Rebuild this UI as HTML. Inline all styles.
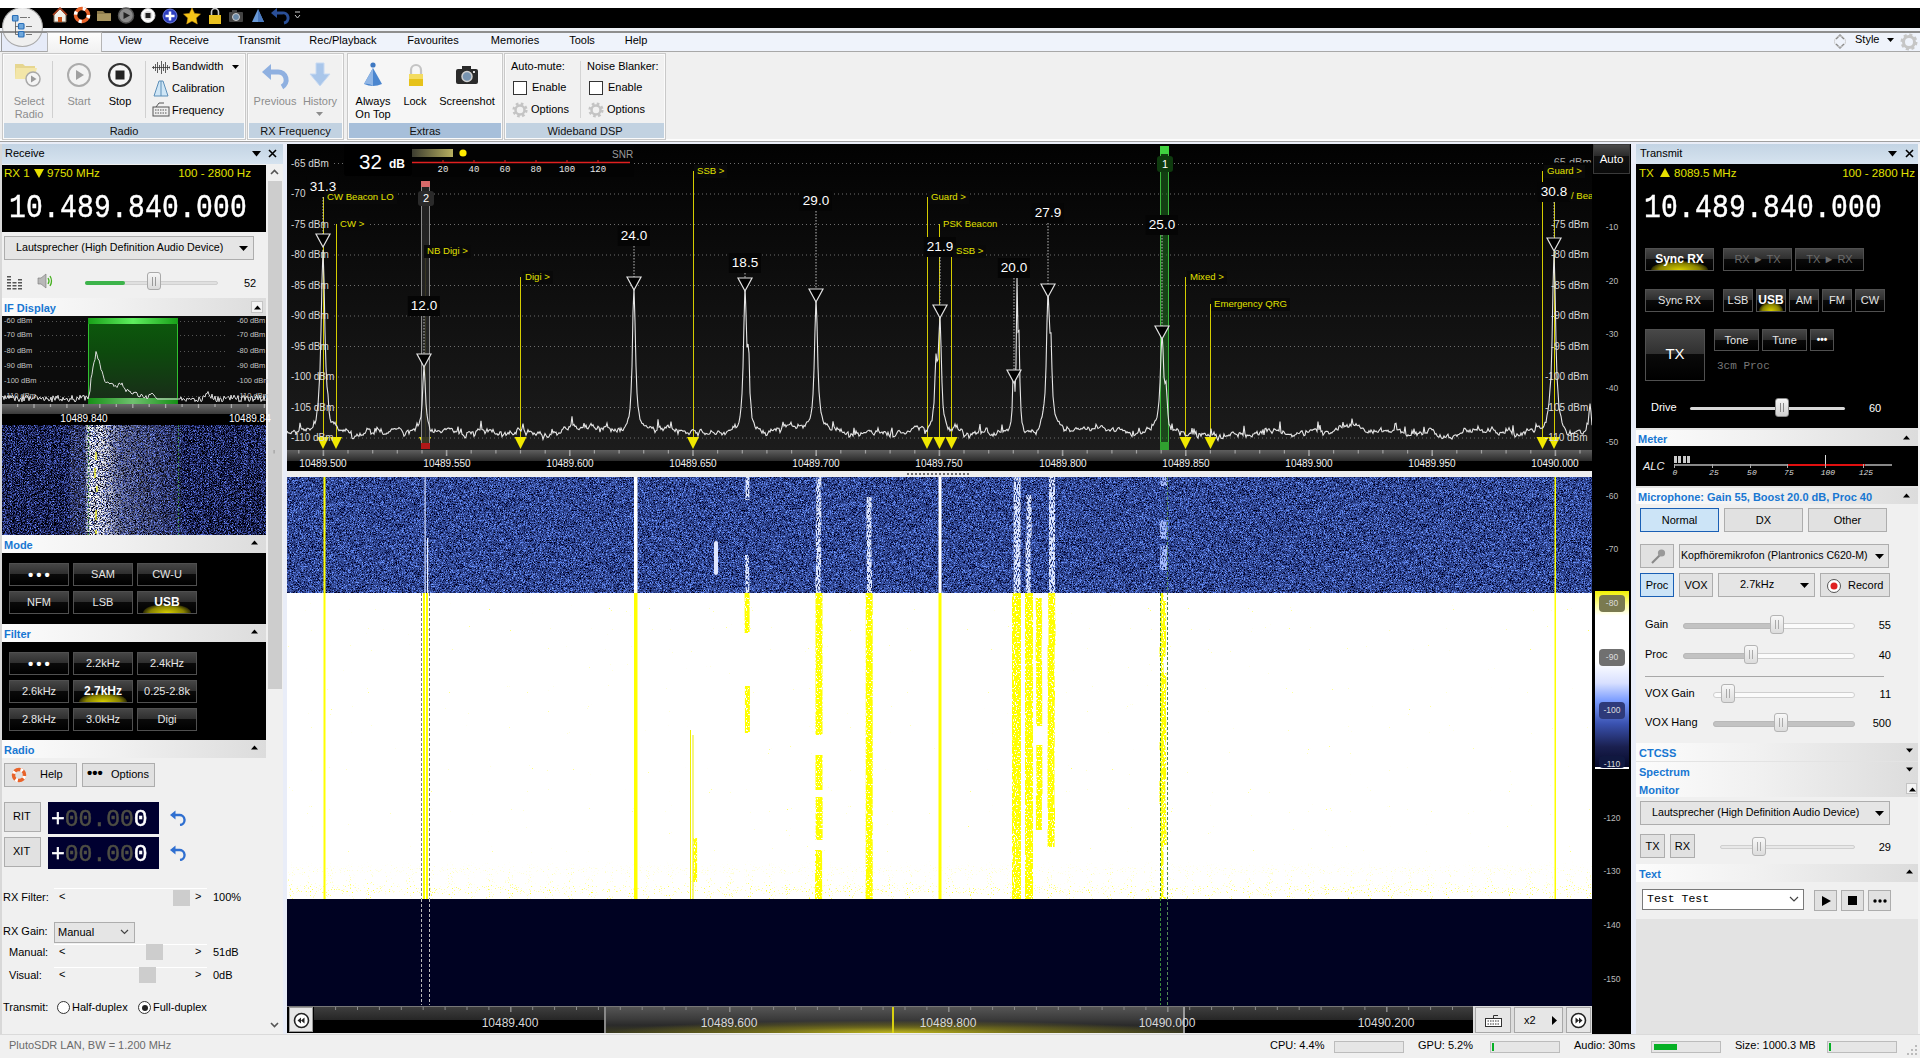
<!DOCTYPE html>
<html><head><meta charset="utf-8"><style>
*{margin:0;padding:0;box-sizing:border-box}
html,body{width:1920px;height:1058px;overflow:hidden;background:#f0f0f0;font-family:"Liberation Sans",sans-serif;font-size:11px;color:#000}
.a{position:absolute}
.t{position:absolute;white-space:nowrap;line-height:1}
.c{transform:translateX(-50%)}
.mono{font-family:"Liberation Mono",monospace}
.bb{position:absolute;background:linear-gradient(#464646 0%,#2e2e2e 48%,#0a0a0a 49%,#000 100%);border:1px solid #505050;color:#e6e6e6;text-align:center;font-size:11px}
.hdr{position:absolute;background:linear-gradient(90deg,#fcfcfc 0%,#f0f0f0 45%,#dcdcdc 100%);color:#1877d2;font-weight:bold;font-size:11px}
.wb{position:absolute;background:#e1e1e1;border:1px solid #adadad;text-align:center;font-size:11px;color:#000}
.grp{position:absolute;border:1px solid #c9c9c9;background:#f1f1f1;box-shadow:inset 0 0 0 1px #fbfbfb}
.glab{position:absolute;left:1px;right:1px;bottom:1px;height:15px;background:#c2d2e1;text-align:center;font-size:11px;line-height:17px;color:#111}
.rt{position:absolute;white-space:nowrap;line-height:1;font-size:11px;transform:translateX(-50%)}
.ph{position:absolute;background:linear-gradient(#c3d4e4,#d6e3ef);font-size:11px}
</style></head><body>
<div class="a" style="left:0px;top:0px;width:1920px;height:8px;background:#fff"></div>
<div class="a" style="left:0px;top:8px;width:1920px;height:20px;background:#000"></div>
<div class="a" style="left:0px;top:28px;width:1920px;height:3px;background:#eef1f6"></div>
<div class="a" style="left:0px;top:31px;width:1920px;height:2px;background:#8e8e8e"></div>
<div class="a" style="left:0px;top:33px;width:1920px;height:18px;background:#eff3fb"></div>
<div class="a" style="left:0px;top:51px;width:1920px;height:1px;background:#a8a8a8"></div>
<div class="a" style="left:1px;top:33px;width:46px;height:18px;background:#e6ebf8;border-left:1px solid #9a9a9a"></div>
<div class="a" style="left:47px;top:32px;width:55px;height:20px;background:linear-gradient(#fdfdfd,#f1f1f1);border:1px solid #b5b5b5;border-bottom:none"></div>
<div class="rt" style="left:74px;top:35px;font-size:11px;">Home</div>
<div class="rt" style="left:130px;top:35px;font-size:11px;">View</div>
<div class="rt" style="left:189px;top:35px;font-size:11px;">Receive</div>
<div class="rt" style="left:259px;top:35px;font-size:11px;">Transmit</div>
<div class="rt" style="left:343px;top:35px;font-size:11px;">Rec/Playback</div>
<div class="rt" style="left:433px;top:35px;font-size:11px;">Favourites</div>
<div class="rt" style="left:515px;top:35px;font-size:11px;">Memories</div>
<div class="rt" style="left:582px;top:35px;font-size:11px;">Tools</div>
<div class="rt" style="left:636px;top:35px;font-size:11px;">Help</div>
<div class="a" style="left:2px;top:7px;width:41px;height:40px;border-radius:50%;background:#efefef;border:1px solid #a9a9a9;clip-path:inset(1px 0 0 0)"></div>
<div class="a" style="left:2px;top:31px;width:41px;height:2px;background:#8e8e8e"></div>
<svg class="a" style="left:10px;top:15px" width="26" height="24" viewBox="0 -1 26 24">
<g stroke="#555" stroke-width="0.8" fill="none"><path d="M5.5 5V18.5H9M5.5 10.5H9M10 1.5H17M18 1.5H20M16 10.5H22M16 18.5H22"/></g>
<g fill="#6fa8dc" stroke="#2a6fb8" stroke-width="1.2">
<rect x="2.5" y="-0.5" width="5.5" height="5.5" rx="1"/><rect x="8.5" y="7.5" width="5.5" height="5.5" rx="1"/><rect x="8.5" y="15.5" width="5.5" height="5.5" rx="1"/></g></svg>
<svg class="a" style="left:50px;top:5px" width="260" height="22" viewBox="0 0 260 22">
<path d="M4 10L10 4L16 10V17H4Z" fill="#f2efe8" stroke="#7a6a5a"/><path d="M3 10L10 3L17 10" fill="none" stroke="#b04020" stroke-width="1.5"/><rect x="8" y="12" width="4" height="5" fill="#c8501a"/>
<circle cx="32" cy="10" r="6.5" fill="none" stroke="#e8632a" stroke-width="3.5"/><circle cx="32" cy="10" r="6.5" fill="none" stroke="#fff" stroke-width="3.5" stroke-dasharray="3 7.2"/>
<path d="M47 6H53L55 8H61V16H47Z" fill="#8c7a4c"/><path d="M47 9H61V16H47Z" fill="#a89560"/>
<circle cx="76" cy="10.5" r="7.5" fill="#8a8a8a" stroke="#555" stroke-width="1.5"/><path d="M73.5 7L80 10.5L73.5 14Z" fill="#222"/>
<circle cx="98" cy="10.5" r="7" fill="#fff" stroke="#ccc" stroke-width="1"/><circle cx="98" cy="10.5" r="4.5" fill="#ddd"/><rect x="95.5" y="8" width="5" height="5" fill="#222"/>
<circle cx="120" cy="11" r="7" fill="#2d3fbf" stroke="#6f7fe0" stroke-width="1"/><path d="M120 6.5V15.5M115.5 11H124.5" stroke="#fff" stroke-width="2.5"/>
<path d="M142 3L144.6 8.4L150.5 9.1L146.2 13.1L147.3 19L142 16.1L136.7 19L137.8 13.1L133.5 9.1L139.4 8.4Z" fill="#f5c518" stroke="#d89a10" stroke-width=".5"/>
<path d="M161.5 10V7A3.5 3.5 0 0 1 168.5 7V10" fill="none" stroke="#c8c8c8" stroke-width="1.6"/><rect x="159" y="10" width="12" height="9" fill="#e8c020"/>
<rect x="179" y="7" width="14" height="10" rx="1" fill="#444"/><circle cx="186" cy="12" r="3.5" fill="#6a8aa8" stroke="#ccc"/><rect x="182" y="5" width="5" height="3" fill="#444"/>
<path d="M208 4L202 17H214Z" fill="#6a9ad8"/><path d="M208 4L208 17H214Z" fill="#4a7ac0"/>
<path d="M225 8H232A5 5 0 0 1 234 18" fill="none" stroke="#2a4f98" stroke-width="3"/><path d="M221 8L227 3V13Z" fill="#2a4f98"/>
<path d="M245 7H250M245 10L247.5 13L250 10" stroke="#ccc" fill="none"/>
</svg>
<svg class="a" style="left:1834px;top:33px" width="12" height="17" viewBox="0 0 12 17"><path d="M2 6L6 2L10 6M2 11L6 15L10 11" fill="none" stroke="#888" stroke-width="1.5"/><circle cx="6" cy="8.5" r="5.5" fill="none" stroke="#ccc"/></svg>
<div class="t" style="left:1855px;top:34px;font-size:11px">Style</div>
<svg class="a" style="left:1887px;top:38px" width="8" height="5"><path d="M0 0H7L3.5 4Z" fill="#000"/></svg>
<svg class="a" style="left:1900px;top:33px" width="18" height="18" viewBox="0 0 18 18"><circle cx="9" cy="9" r="5.5" fill="none" stroke="#c6c6c6" stroke-width="3"/><circle cx="9" cy="9" r="7" fill="none" stroke="#c6c6c6" stroke-width="3" stroke-dasharray="3 2.5"/></svg>
<div class="a" style="left:0px;top:52px;width:1920px;height:87px;background:#f0f0f0"></div>
<div class="a" style="left:0px;top:139px;width:1920px;height:2px;background:#fdfdfd"></div>
<div class="a" style="left:0px;top:141px;width:1920px;height:1px;background:#a0a0a0"></div>
<div class="a" style="left:0px;top:142px;width:1920px;height:2px;background:#e9edf7"></div>
<div class="grp" style="left:2px;top:53px;width:244px;height:87px;"><div class="glab" style="">Radio</div></div>
<div class="grp" style="left:247px;top:53px;width:97px;height:87px;"><div class="glab" style="">RX Frequency</div></div>
<div class="grp" style="left:347px;top:53px;width:156px;height:87px;background:#f6f6f6;"><div class="glab" style="background:#a7bfda;">Extras</div></div>
<div class="grp" style="left:504px;top:53px;width:162px;height:87px;"><div class="glab" style="">Wideband DSP</div></div>
<svg class="a" style="left:13px;top:60px" width="32" height="30" viewBox="0 0 32 30">
<path d="M2 4H10L12 6H22V18H2Z" fill="#e6d690"/><path d="M3 8H24L21 19H2Z" fill="#f3e6a8"/>
<circle cx="20" cy="19" r="7" fill="#f4f4f4" stroke="#a8a8a8" stroke-width="1.5"/><path d="M18 15.5L23.5 19L18 22.5Z" fill="#9a9a9a"/></svg>
<div class="rt" style="left:29px;top:96px;color:#8d8d8d;">Select</div>
<div class="rt" style="left:29px;top:109px;color:#8d8d8d;">Radio</div>
<div class="a" style="left:52px;top:61px;width:1px;height:57px;background:#d0d0d0"></div>
<svg class="a" style="left:66px;top:62px" width="26" height="26" viewBox="0 0 26 26"><circle cx="13" cy="13" r="11" fill="#f3f3f3" stroke="#acacac" stroke-width="2"/><path d="M10 8L18 13L10 18Z" fill="#a0a0a0"/></svg>
<div class="rt" style="left:79px;top:96px;color:#8d8d8d;">Start</div>
<svg class="a" style="left:107px;top:62px" width="26" height="26" viewBox="0 0 26 26"><circle cx="13" cy="13" r="11" fill="#f6f6f6" stroke="#333" stroke-width="2.2"/><rect x="8.5" y="8.5" width="9" height="9" fill="#222"/></svg>
<div class="rt" style="left:120px;top:96px;">Stop</div>
<div class="a" style="left:145px;top:61px;width:1px;height:57px;background:#d0d0d0"></div>
<svg class="a" style="left:152px;top:60px" width="18" height="60" viewBox="0 0 18 60">
<path d="M1.5 6V9M3.5 4V11M5.5 2V13M7.5 5V10M9.5 1V14M11.5 4V11M13.5 2V13M15.5 5V10M17.5 6.5V8.5M0 7.5H18" stroke="#3a3a3a" stroke-width="0.8"/>
<path d="M7 21L2 36H16L11 21Z" fill="#cfe6f6" stroke="#5d8fb8"/><path d="M9 21V36" stroke="#5d8fb8"/>
<rect x="1" y="47" width="16" height="9" fill="#eee" stroke="#555"/><path d="M3 50H15M3 53H15" stroke="#555" stroke-dasharray="1.5 1"/><path d="M4 47L7 43H12" stroke="#555" fill="none"/></svg>
<div class="t" style="left:172px;top:61px;">Bandwidth</div>
<svg class="a" style="left:232px;top:65px" width="7" height="4"><path d="M0 0H7L3.5 4Z" fill="#000"/></svg>
<div class="t" style="left:172px;top:83px;">Calibration</div>
<div class="t" style="left:172px;top:105px;">Frequency</div>
<svg class="a" style="left:260px;top:61px" width="32" height="30" viewBox="0 0 32 30"><path d="M6 11H18A8 8 0 0 1 22 26" fill="none" stroke="#8fb0e0" stroke-width="5"/><path d="M2 11L11 3V19Z" fill="#8fb0e0"/></svg>
<div class="rt" style="left:275px;top:96px;color:#8d8d8d;">Previous</div>
<svg class="a" style="left:309px;top:62px" width="22" height="26" viewBox="0 0 22 26"><path d="M7 1H15V12H21L11 24L1 12H7Z" fill="#a9c6ea" stroke="#c8daf2"/></svg>
<div class="rt" style="left:320px;top:96px;color:#8d8d8d;">History</div>
<svg class="a" style="left:316px;top:112px" width="8" height="4"><path d="M0 0H7L3.5 4Z" fill="#8d8d8d"/></svg>
<svg class="a" style="left:361px;top:62px" width="24" height="26" viewBox="0 0 24 26"><circle cx="12" cy="3" r="2.6" fill="#3e78c2"/><path d="M12 6L3 22Q12 26 21 22Z" fill="#4b86cf"/><path d="M12 6L3 22Q8 21 12 24Z" fill="#8fb5e5"/></svg>
<div class="rt" style="left:373px;top:96px;">Always</div>
<div class="rt" style="left:373px;top:109px;">On Top</div>
<svg class="a" style="left:406px;top:63px" width="20" height="24" viewBox="0 0 20 24"><path d="M5 11V7A5 5 0 0 1 15 7V11" fill="none" stroke="#c4c4c4" stroke-width="2.2"/><rect x="3" y="11" width="14" height="12" fill="#e6c21a"/><rect x="3" y="11" width="14" height="5" fill="#f4dc60"/></svg>
<div class="rt" style="left:415px;top:96px;">Lock</div>
<svg class="a" style="left:455px;top:65px" width="24" height="20" viewBox="0 0 24 20"><rect x="1" y="4" width="22" height="15" rx="2" fill="#2b2b2b"/><rect x="7" y="1" width="9" height="4" fill="#2b2b2b"/><circle cx="12" cy="11.5" r="5" fill="#7894b0" stroke="#d0d0d0" stroke-width="1.5"/><rect x="18" y="6" width="2" height="2" fill="#ddd"/></svg>
<div class="rt" style="left:467px;top:96px;">Screenshot</div>
<div class="a" style="left:513px;top:81px;width:14px;height:14px;background:#fff;border:1px solid #333"></div>
<svg class="a" style="left:512px;top:102px" width="16" height="16" viewBox="0 0 16 16"><circle cx="8" cy="8" r="4.5" fill="none" stroke="#c4c4c4" stroke-width="2.5"/><circle cx="8" cy="8" r="6.3" fill="none" stroke="#c4c4c4" stroke-width="2.6" stroke-dasharray="2.6 2.35"/></svg>
<div class="a" style="left:589px;top:81px;width:14px;height:14px;background:#fff;border:1px solid #333"></div>
<svg class="a" style="left:588px;top:102px" width="16" height="16" viewBox="0 0 16 16"><circle cx="8" cy="8" r="4.5" fill="none" stroke="#c4c4c4" stroke-width="2.5"/><circle cx="8" cy="8" r="6.3" fill="none" stroke="#c4c4c4" stroke-width="2.6" stroke-dasharray="2.6 2.35"/></svg>
<div class="t" style="left:511px;top:61px;">Auto-mute:</div>
<div class="t" style="left:532px;top:82px;">Enable</div>
<div class="t" style="left:531px;top:104px;">Options</div>
<div class="a" style="left:580px;top:61px;width:1px;height:57px;background:#d4d4d4"></div>
<div class="t" style="left:587px;top:61px;">Noise Blanker:</div>
<div class="t" style="left:608px;top:82px;">Enable</div>
<div class="t" style="left:607px;top:104px;">Options</div>
<div class="a" style="left:0px;top:144px;width:284px;height:890px;background:#f0f0f0"></div>
<div class="a" style="left:0px;top:144px;width:2px;height:890px;background:#d8d8d8"></div>
<div class="a" style="left:283px;top:144px;width:4px;height:890px;background:#e9edf8"></div>
<div class="ph" style="left:2px;top:144px;width:281px;height:20px;"></div>
<div class="t" style="left:5px;top:148px;font-size:11px">Receive</div>
<svg class="a" style="left:252px;top:151px" width="9" height="6"><path d="M0 0H9L4.5 5.5Z" fill="#000"/></svg>
<svg class="a" style="left:268px;top:149px" width="9" height="9"><path d="M1 1L8 8M8 1L1 8" stroke="#000" stroke-width="1.6"/></svg>
<div class="a" style="left:267px;top:165px;width:16px;height:868px;background:#f0f0f0"></div>
<svg class="a" style="left:270px;top:169px" width="9" height="6"><path d="M1 5L4.5 1.5L8 5" fill="none" stroke="#555" stroke-width="1.6"/></svg>
<div class="a" style="left:268px;top:181px;width:14px;height:508px;background:#cdcdcd"></div>
<svg class="a" style="left:270px;top:1022px" width="9" height="6"><path d="M1 1L4.5 4.5L8 1" fill="none" stroke="#555" stroke-width="1.6"/></svg>
<div class="a" style="left:2px;top:165px;width:264px;height:67px;background:#000"></div>
<div class="t" style="left:4px;top:167px;color:#e0e000;font-size:11.6px">RX 1</div>
<svg class="a" style="left:34px;top:169px" width="10" height="9"><path d="M0 0H10L5 9Z" fill="#e8e000"/></svg>
<div class="t" style="left:47px;top:167px;color:#e0e000;font-size:11.6px">9750 MHz</div>
<div class="t" style="left:251px;top:167px;color:#e0e000;font-size:11.6px;transform:translateX(-100%)">100 - 2800 Hz</div>
<div class="t mono" style="left:9px;top:192px;color:#fff;font-size:28px;letter-spacing:0.2px;transform:scaleY(1.17);transform-origin:0 0;-webkit-text-stroke:0.4px #fff">10.489.840.000</div>
<div class="a" style="left:4px;top:236px;width:250px;height:24px;background:#e5e5e5;border:1px solid #adadad"></div>
<div class="t" style="left:16px;top:242px;font-size:10.7px">Lautsprecher (High Definition Audio Device)</div>
<svg class="a" style="left:239px;top:246px" width="9" height="5"><path d="M0 0H9L4.5 5Z" fill="#000"/></svg>
<svg class="a" style="left:7px;top:275px" width="18" height="15" viewBox="0 0 18 15"><g fill="#555"><rect x="0" y="1" width="4" height="1.5"/><rect x="0" y="4" width="4" height="1.5"/><rect x="0" y="7" width="4" height="1.5"/><rect x="0" y="10" width="4" height="1.5"/><rect x="0" y="13" width="4" height="1.5"/><rect x="5.5" y="7" width="4" height="1.5"/><rect x="5.5" y="10" width="4" height="1.5"/><rect x="5.5" y="13" width="4" height="1.5"/><rect x="11" y="4" width="4" height="1.5"/><rect x="11" y="7" width="4" height="1.5"/><rect x="11" y="10" width="4" height="1.5"/><rect x="11" y="13" width="4" height="1.5"/></g></svg>
<svg class="a" style="left:37px;top:273px" width="18" height="16" viewBox="0 0 18 16"><path d="M1 5H4L9 1V15L4 11H1Z" fill="#b8b8b8" stroke="#777" stroke-width=".6"/><path d="M11 5Q13 8 11 11M13 3Q16 8 13 13" fill="none" stroke="#46b020" stroke-width="1.3"/></svg>
<div class="a" style="left:85px;top:281px;width:133px;height:4px;background:#e0e0e0;border:1px solid #d0d0d0;border-radius:2px"></div>
<div class="a" style="left:85px;top:281px;width:40px;height:4px;background:#3cb34a;border-radius:2px"></div>
<div class="a" style="left:147px;top:272px;width:14px;height:18px;background:linear-gradient(#f6f6f6,#dadada);border:1px solid #a9a9a9;border-radius:3px"><div class="a" style="left:4px;top:4px;width:4px;height:9px;border-left:1px solid #999;border-right:1px solid #999"></div></div>
<div class="t" style="left:244px;top:278px;">52</div>
<div class="hdr" style="left:2px;top:298px;width:264px;height:18px;line-height:20px;padding-left:2px">IF Display</div>
<div class="a" style="left:251px;top:301px;width:12px;height:12px;background:#f4f4f4;border:1px solid #c4c4c4"><svg class="a" style="left:2px;top:3px" width="7" height="5"><path d="M0 4.5H7L3.5 0.5Z" fill="#000"/></svg></div>
<div class="a" style="left:2px;top:316px;width:264px;height:88px;background:#0c0c0c"></div>
<div class="t" style="left:4px;top:317px;font-size:7.5px;color:#c4c4c4">-60 dBm</div>
<div class="t" style="left:237px;top:317px;font-size:7.5px;color:#c4c4c4">-60 dBm</div>
<div class="a" style="left:40px;top:321px;width:185px;height:1px;background:repeating-linear-gradient(90deg,#555 0 1px,transparent 1px 4px)"></div>
<div class="t" style="left:4px;top:331px;font-size:7.5px;color:#c4c4c4">-70 dBm</div>
<div class="t" style="left:237px;top:331px;font-size:7.5px;color:#c4c4c4">-70 dBm</div>
<div class="a" style="left:40px;top:335px;width:185px;height:1px;background:repeating-linear-gradient(90deg,#555 0 1px,transparent 1px 4px)"></div>
<div class="t" style="left:4px;top:347px;font-size:7.5px;color:#c4c4c4">-80 dBm</div>
<div class="t" style="left:237px;top:347px;font-size:7.5px;color:#c4c4c4">-80 dBm</div>
<div class="a" style="left:40px;top:351px;width:185px;height:1px;background:repeating-linear-gradient(90deg,#555 0 1px,transparent 1px 4px)"></div>
<div class="t" style="left:4px;top:362px;font-size:7.5px;color:#c4c4c4">-90 dBm</div>
<div class="t" style="left:237px;top:362px;font-size:7.5px;color:#c4c4c4">-90 dBm</div>
<div class="a" style="left:40px;top:366px;width:185px;height:1px;background:repeating-linear-gradient(90deg,#555 0 1px,transparent 1px 4px)"></div>
<div class="t" style="left:4px;top:377px;font-size:7.5px;color:#c4c4c4">-100 dBm</div>
<div class="t" style="left:237px;top:377px;font-size:7.5px;color:#c4c4c4">-100 dBm</div>
<div class="a" style="left:40px;top:381px;width:185px;height:1px;background:repeating-linear-gradient(90deg,#555 0 1px,transparent 1px 4px)"></div>
<div class="t" style="left:4px;top:392px;font-size:7.5px;color:#c4c4c4">-110 dBm</div>
<div class="t" style="left:237px;top:392px;font-size:7.5px;color:#c4c4c4">-110 dBm</div>
<div class="a" style="left:40px;top:396px;width:185px;height:1px;background:repeating-linear-gradient(90deg,#555 0 1px,transparent 1px 4px)"></div>
<div class="a" style="left:88px;top:318px;width:90px;height:86px;background:linear-gradient(#0c5a0c 0%,#0d4a0d 40%,#1a2a1a 100%);border-left:1px solid #30c030;border-right:1px solid #30c030"></div>
<div class="a" style="left:88px;top:318px;width:90px;height:6px;background:linear-gradient(90deg,#18a018,#5ff05f 50%,#18a018)"></div>
<div class="a" style="left:88px;top:398px;width:90px;height:6px;background:linear-gradient(90deg,#159015,#6fc06f 50%,#159015)"></div>
<svg class="a" style="left:0;top:0" width="284" height="410"><polyline points="2,397.3 3,396.1 4,399.6 5,395.5 6,398.8 7,397.6 8,395.4 9,398.6 10,395.3 11,398.0 12,395.5 13,395.6 14,398.0 15,400.8 16,395.9 17,396.6 18,399.4 19,401.6 20,399.0 21,397.8 22,401.8 23,395.3 24,401.0 25,397.0 26,396.0 27,395.8 28,397.2 29,400.7 30,396.3 31,399.1 32,399.5 33,397.6 34,398.8 35,395.4 36,395.4 37,396.4 38,399.8 39,398.0 40,397.2 41,399.1 42,398.2 43,397.1 44,400.6 45,399.9 46,396.7 47,399.0 48,398.7 49,401.1 50,400.1 51,397.0 52,401.9 53,395.8 54,397.9 55,400.3 56,396.1 57,398.4 58,395.3 59,399.7 60,400.4 61,399.0 62,401.1 63,397.2 64,399.9 65,399.2 66,399.1 67,398.2 68,400.9 69,401.6 70,398.3 71,399.6 72,395.4 73,399.9 74,399.5 75,402.0 76,400.8 77,397.0 78,397.7 79,399.7 80,395.2 81,398.2 82,396.2 83,395.8 84,395.4 85,400.4 86,395.9 87,396.7 88,399.0 89,395.0 90,391.0 91,378.2 92,374.2 93,367.0 94,362.3 95,359.6 96,351.5 97,354.7 98,359.2 99,359.9 100,364.4 101,369.8 102,371.1 103,374.8 104,378.7 105,381.7 106,382.8 107,382.0 108,382.2 109,383.1 110,384.0 111,383.0 112,383.8 113,383.8 114,386.5 115,385.4 116,386.2 117,387.5 118,385.3 119,383.1 120,383.5 121,384.8 122,382.9 123,386.3 124,387.7 125,389.0 126,391.7 127,389.6 128,389.6 129,391.4 130,391.0 131,393.2 132,393.8 133,394.0 134,392.0 135,392.8 136,391.9 137,393.1 138,396.3 139,396.5 140,397.0 141,394.4 142,394.6 143,396.7 144,397.9 145,397.5 146,395.6 147,399.0 148,397.8 149,394.6 150,394.4 151,394.2 152,393.0 153,394.2 154,395.0 155,396.6 156,397.8 157,399.0 158,399.0 159,399.0 160,399.0 161,399.0 162,399.0 163,399.0 164,399.0 165,399.0 166,399.0 167,399.0 168,399.0 169,399.0 170,399.0 171,399.0 172,399.0 173,399.0 174,399.0 175,399.0 176,399.0 177,399.0 178,399.0 179,399.0 180,399.0 181,396.9 182,400.4 183,398.6 184,398.9 185,400.3 186,401.4 187,398.1 188,399.3 189,398.5 190,398.6 191,399.8 192,398.2 193,398.7 194,398.3 195,401.6 196,399.9 197,401.1 198,401.6 199,396.8 200,398.9 201,401.6 202,400.9 203,396.0 204,395.9 205,397.1 206,393.5 207,393.7 208,391.5 209,394.7 210,396.5 211,398.3 212,394.1 213,399.0 214,399.6 215,396.0 216,401.2 217,401.8 218,396.5 219,401.7 220,397.8 221,398.4 222,401.9 223,400.8 224,396.1 225,398.0 226,398.6 227,397.4 228,396.4 229,397.2 230,400.1 231,395.1 232,398.9 233,398.1 234,395.1 235,397.3 236,399.4 237,398.6 238,395.5 239,401.9 240,400.5 241,401.8 242,395.7 243,396.9 244,395.3 245,400.5 246,396.9 247,395.9 248,398.0 249,401.4 250,400.7 251,396.8 252,396.0 253,401.4 254,399.0 255,399.9 256,395.6 257,395.4 258,399.8 259,398.0 260,395.5 261,401.6 262,399.4 263,400.6 264,395.6 265,401.0" fill="none" stroke="#ddd" stroke-width="1"/></svg>
<div class="a" style="left:2px;top:404px;width:264px;height:10px;background:linear-gradient(#6a6a6a,#3a3a3a)"></div>
<div class="a" style="left:2px;top:414px;width:264px;height:11px;background:#000"></div>
<div class="t" style="left:84px;top:414px;color:#fff;font-size:10px;transform:translateX(-50%)">10489.840</div>
<div class="t" style="left:229px;top:414px;color:#fff;font-size:10px">10489.84</div>
<svg class="a" style="left:0;top:404px" width="266" height="8"><line x1="17.6" y1="0" x2="17.6" y2="3" stroke="#aaa" stroke-width="1.3"/><line x1="34.0" y1="0" x2="34.0" y2="4" stroke="#aaa" stroke-width="1.3"/><line x1="50.5" y1="0" x2="50.5" y2="3" stroke="#aaa" stroke-width="1.3"/><line x1="66.9" y1="0" x2="66.9" y2="4" stroke="#aaa" stroke-width="1.3"/><line x1="83.4" y1="0" x2="83.4" y2="3" stroke="#aaa" stroke-width="1.3"/><line x1="99.8" y1="0" x2="99.8" y2="4" stroke="#aaa" stroke-width="1.3"/><line x1="116.3" y1="0" x2="116.3" y2="3" stroke="#aaa" stroke-width="1.3"/><line x1="132.8" y1="0" x2="132.8" y2="4" stroke="#aaa" stroke-width="1.3"/><line x1="149.2" y1="0" x2="149.2" y2="3" stroke="#aaa" stroke-width="1.3"/><line x1="165.6" y1="0" x2="165.6" y2="4" stroke="#aaa" stroke-width="1.3"/><line x1="182.1" y1="0" x2="182.1" y2="3" stroke="#aaa" stroke-width="1.3"/><line x1="198.5" y1="0" x2="198.5" y2="4" stroke="#aaa" stroke-width="1.3"/><line x1="215.0" y1="0" x2="215.0" y2="3" stroke="#aaa" stroke-width="1.3"/><line x1="231.4" y1="0" x2="231.4" y2="4" stroke="#aaa" stroke-width="1.3"/><line x1="247.9" y1="0" x2="247.9" y2="3" stroke="#aaa" stroke-width="1.3"/><line x1="264.4" y1="0" x2="264.4" y2="4" stroke="#aaa" stroke-width="1.3"/></svg>
<svg class="a" style="left:2px;top:425px" width="264" height="110" viewBox="2 425 264 110"><defs>
<filter id="ifn" x="0" y="0" width="100%" height="100%" color-interpolation-filters="sRGB"><feTurbulence type="fractalNoise" baseFrequency="1.3" numOctaves="2" seed="17"/><feColorMatrix values="1.1 0 0 0 -0.44  1.4 0 0 0 -0.56  2.4 0 0 0 -0.86  0 0 0 0 1"/></filter>
<filter id="ifm" x="0" y="0" width="100%" height="100%" color-interpolation-filters="sRGB"><feTurbulence type="fractalNoise" baseFrequency="0.6 1.2" numOctaves="2" seed="4"/><feColorMatrix values="5 0 0 0 -2  5 0 0 0 -2  5 0 0 0 -2  0 0 0 0 1"/></filter>
<linearGradient id="ifg" x1="84" x2="180" gradientUnits="userSpaceOnUse"><stop offset="0" stop-color="#fff" stop-opacity="0.15"/><stop offset=".06" stop-color="#fff" stop-opacity="1"/><stop offset=".22" stop-color="#fff" stop-opacity=".9"/><stop offset=".38" stop-color="#dfe6ff" stop-opacity=".45"/><stop offset="1" stop-color="#c0ccff" stop-opacity=".12"/></linearGradient>
<mask id="ifmask" maskUnits="userSpaceOnUse" x="2" y="425" width="264" height="110"><rect x="2" y="425" width="264" height="110" filter="url(#ifm)"/></mask></defs>
<rect x="2" y="425" width="264" height="110" filter="url(#ifn)"/>
<rect x="70" y="425" width="112" height="110" fill="url(#ifg)" mask="url(#ifmask)"/>
<rect x="86" y="425" width="18" height="110" fill="#fff" opacity=".35" mask="url(#ifmask)"/>
<line x1="88.5" y1="425" x2="88.5" y2="535" stroke="#3a8a3a" stroke-dasharray="2 2"/><line x1="178.5" y1="425" x2="178.5" y2="535" stroke="#3a8a3a" stroke-dasharray="2 2"/>
<path d="M96 452V460M95 468V478M97 486V492M96 530V534M96 510V520" stroke="#ee0" stroke-width="1.2"/></svg>
<div class="hdr" style="left:2px;top:535px;width:264px;height:18px;line-height:20px;padding-left:2px">Mode</div><svg class="a" style="left:251px;top:540px" width="8" height="5"><path d="M0 4.5H7L3.5 0.5Z" fill="#000"/></svg>
<div class="a" style="left:2px;top:553px;width:264px;height:71px;background:#000"></div>
<div class="bb" style="left:9px;top:563px;width:60px;height:23px;line-height:21px;font-size:11px;"><span style="position:relative"><span style="font-size:15px;font-weight:bold;letter-spacing:3px;margin-left:3px;color:#fff">•••</span></span></div>
<div class="bb" style="left:73px;top:563px;width:60px;height:23px;line-height:21px;font-size:11px;"><span style="position:relative">SAM</span></div>
<div class="bb" style="left:137px;top:563px;width:60px;height:23px;line-height:21px;font-size:11px;"><span style="position:relative">CW-U</span></div>
<div class="bb" style="left:9px;top:591px;width:60px;height:23px;line-height:21px;font-size:11px;"><span style="position:relative">NFM</span></div>
<div class="bb" style="left:73px;top:591px;width:60px;height:23px;line-height:21px;font-size:11px;"><span style="position:relative">LSB</span></div>
<div class="bb" style="left:137px;top:591px;width:60px;height:23px;line-height:21px;font-size:12px;font-weight:bold;color:#fff;"><div class="a" style="left:8%;right:8%;bottom:0;height:9px;border-radius:50% 50% 0 0/100% 100% 0 0;background:radial-gradient(ellipse at 50% 100%,#d8d000 0%,#8a8400 50%,rgba(0,0,0,0) 80%)"></div><span style="position:relative">USB</span></div>
<div class="hdr" style="left:2px;top:624px;width:264px;height:18px;line-height:20px;padding-left:2px">Filter</div><svg class="a" style="left:251px;top:629px" width="8" height="5"><path d="M0 4.5H7L3.5 0.5Z" fill="#000"/></svg>
<div class="a" style="left:2px;top:642px;width:264px;height:98px;background:#000"></div>
<div class="bb" style="left:9px;top:652px;width:60px;height:23px;line-height:21px;font-size:11px;"><span style="position:relative"><span style="font-size:15px;font-weight:bold;letter-spacing:3px;margin-left:3px;color:#fff">•••</span></span></div>
<div class="bb" style="left:73px;top:652px;width:60px;height:23px;line-height:21px;font-size:11px;"><span style="position:relative">2.2kHz</span></div>
<div class="bb" style="left:137px;top:652px;width:60px;height:23px;line-height:21px;font-size:11px;"><span style="position:relative">2.4kHz</span></div>
<div class="bb" style="left:9px;top:680px;width:60px;height:23px;line-height:21px;font-size:11px;"><span style="position:relative">2.6kHz</span></div>
<div class="bb" style="left:73px;top:680px;width:60px;height:23px;line-height:21px;font-size:12px;font-weight:bold;color:#fff;"><div class="a" style="left:8%;right:8%;bottom:0;height:9px;border-radius:50% 50% 0 0/100% 100% 0 0;background:radial-gradient(ellipse at 50% 100%,#d8d000 0%,#8a8400 50%,rgba(0,0,0,0) 80%)"></div><span style="position:relative">2.7kHz</span></div>
<div class="bb" style="left:137px;top:680px;width:60px;height:23px;line-height:21px;font-size:11px;"><span style="position:relative">0.25-2.8k</span></div>
<div class="bb" style="left:9px;top:708px;width:60px;height:23px;line-height:21px;font-size:11px;"><span style="position:relative">2.8kHz</span></div>
<div class="bb" style="left:73px;top:708px;width:60px;height:23px;line-height:21px;font-size:11px;"><span style="position:relative">3.0kHz</span></div>
<div class="bb" style="left:137px;top:708px;width:60px;height:23px;line-height:21px;font-size:11px;"><span style="position:relative">Digi</span></div>
<div class="hdr" style="left:2px;top:740px;width:264px;height:18px;line-height:20px;padding-left:2px">Radio</div><svg class="a" style="left:251px;top:745px" width="8" height="5"><path d="M0 4.5H7L3.5 0.5Z" fill="#000"/></svg>
<div class="wb" style="left:4px;top:763px;width:73px;height:24px;"></div>
<svg class="a" style="left:11px;top:767px" width="16" height="16" viewBox="0 0 16 16"><circle cx="8" cy="8" r="5.5" fill="none" stroke="#e8632a" stroke-width="3.5"/><circle cx="8" cy="8" r="5.5" fill="none" stroke="#fff" stroke-width="3.6" stroke-dasharray="2.5 6.1" stroke-dashoffset="-1"/></svg>
<div class="t" style="left:40px;top:769px;">Help</div>
<div class="wb" style="left:82px;top:763px;width:73px;height:24px;"></div>
<div class="t" style="left:87px;top:765px;font-size:15px;font-weight:bold;letter-spacing:0px">•••</div>
<div class="t" style="left:111px;top:769px;">Options</div>
<div class="wb" style="left:4px;top:802px;width:37px;height:30px;"></div>
<div class="t" style="left:13px;top:811px;">RIT</div>
<div class="a" style="left:48px;top:802px;width:111px;height:32px;background:#000030"></div>
<div class="t mono" style="left:51px;top:808px;color:#fff;font-size:23px;-webkit-text-stroke:0.5px currentColor;transform:scaleY(1.05);transform-origin:0 0">+<span style="color:#4e4e44">00.00</span>0</div>
<svg class="a" style="left:169px;top:810px" width="18" height="16" viewBox="0 0 18 16"><path d="M5 5H10A5 5 0 0 1 11 15" fill="none" stroke="#2f6fd0" stroke-width="2.4"/><path d="M1 5L6.5 0.5V9.5Z" fill="#2f6fd0"/></svg>
<div class="wb" style="left:4px;top:837px;width:37px;height:30px;"></div>
<div class="t" style="left:13px;top:846px;">XIT</div>
<div class="a" style="left:48px;top:837px;width:111px;height:32px;background:#000030"></div>
<div class="t mono" style="left:51px;top:843px;color:#fff;font-size:23px;-webkit-text-stroke:0.5px currentColor;transform:scaleY(1.05);transform-origin:0 0">+<span style="color:#4e4e44">00.00</span>0</div>
<svg class="a" style="left:169px;top:845px" width="18" height="16" viewBox="0 0 18 16"><path d="M5 5H10A5 5 0 0 1 11 15" fill="none" stroke="#2f6fd0" stroke-width="2.4"/><path d="M1 5L6.5 0.5V9.5Z" fill="#2f6fd0"/></svg>
<div class="t" style="left:3px;top:892px;">RX Filter:</div>
<div class="a" style="left:54px;top:888px;width:153px;height:1px;background:#fff"></div>
<div class="t" style="left:59px;top:891px;font-size:11px">&lt;</div>
<div class="a" style="left:173px;top:890px;width:17px;height:16px;background:#cdcdcd"></div>
<div class="t" style="left:195px;top:891px;font-size:11px">&gt;</div>
<div class="t" style="left:213px;top:892px;">100%</div>
<div class="t" style="left:3px;top:926px;">RX Gain:</div>
<div class="a" style="left:54px;top:922px;width:81px;height:21px;background:#e5e5e5;border:1px solid #adadad"></div>
<div class="t" style="left:58px;top:927px;">Manual</div>
<svg class="a" style="left:120px;top:929px" width="9" height="6"><path d="M1 1L4.5 4.5L8 1" fill="none" stroke="#444" stroke-width="1.2"/></svg>
<div class="a" style="left:54px;top:944px;width:153px;height:1px;background:#fff"></div>
<div class="t" style="left:9px;top:947px;">Manual:</div>
<div class="t" style="left:59px;top:946px;">&lt;</div>
<div class="a" style="left:146px;top:944px;width:17px;height:16px;background:#cdcdcd"></div>
<div class="t" style="left:195px;top:946px;">&gt;</div>
<div class="t" style="left:213px;top:947px;">51dB</div>
<div class="a" style="left:54px;top:967px;width:153px;height:1px;background:#fff"></div>
<div class="t" style="left:9px;top:970px;">Visual:</div>
<div class="t" style="left:59px;top:969px;">&lt;</div>
<div class="a" style="left:139px;top:967px;width:17px;height:16px;background:#cdcdcd"></div>
<div class="t" style="left:195px;top:969px;">&gt;</div>
<div class="t" style="left:213px;top:970px;">0dB</div>
<div class="t" style="left:3px;top:1002px;">Transmit:</div>
<div class="a" style="left:57px;top:1001px;width:13px;height:13px;background:#fff;border:1px solid #333;border-radius:50%"></div>
<div class="t" style="left:72px;top:1002px;">Half-duplex</div>
<div class="a" style="left:138px;top:1001px;width:13px;height:13px;background:#fff;border:1px solid #333;border-radius:50%"><div class="a" style="left:2.5px;top:2.5px;width:6px;height:6px;border-radius:50%;background:#222"></div></div>
<div class="t" style="left:153px;top:1002px;">Full-duplex</div>
<div class="a" style="left:0;top:0;width:1592px;height:1058px;overflow:hidden"><div class="a" style="left:287px;top:144px;width:1305px;height:306px;background:linear-gradient(#020202,#1c1c1c)"></div>
<svg class="a" style="left:0;top:0" width="1920" height="1058" viewBox="0 0 1920 1058">
<line x1="334" y1="163.5" x2="1546" y2="163.5" stroke="#6e6e6e" stroke-width="1" stroke-dasharray="1 3"/>
<line x1="334" y1="194.0" x2="1546" y2="194.0" stroke="#6e6e6e" stroke-width="1" stroke-dasharray="1 3"/>
<line x1="334" y1="224.5" x2="1546" y2="224.5" stroke="#6e6e6e" stroke-width="1" stroke-dasharray="1 3"/>
<line x1="334" y1="255.0" x2="1546" y2="255.0" stroke="#6e6e6e" stroke-width="1" stroke-dasharray="1 3"/>
<line x1="334" y1="285.5" x2="1546" y2="285.5" stroke="#6e6e6e" stroke-width="1" stroke-dasharray="1 3"/>
<line x1="334" y1="316.0" x2="1546" y2="316.0" stroke="#6e6e6e" stroke-width="1" stroke-dasharray="1 3"/>
<line x1="334" y1="346.5" x2="1546" y2="346.5" stroke="#6e6e6e" stroke-width="1" stroke-dasharray="1 3"/>
<line x1="334" y1="377.0" x2="1546" y2="377.0" stroke="#6e6e6e" stroke-width="1" stroke-dasharray="1 3"/>
<line x1="334" y1="407.5" x2="1546" y2="407.5" stroke="#6e6e6e" stroke-width="1" stroke-dasharray="1 3"/>
<line x1="334" y1="438.0" x2="1546" y2="438.0" stroke="#6e6e6e" stroke-width="1" stroke-dasharray="1 3"/>
<rect x="344" y="144" width="68" height="32" rx="3" fill="#000"/>
<rect x="412" y="144" width="222" height="33" fill="#030303"/>
<defs><linearGradient id="snrg" x1="0" x2="1"><stop offset="0" stop-color="#3c3c30"/><stop offset="1" stop-color="#b8b060"/></linearGradient></defs>
<rect x="412" y="149" width="41" height="8" fill="url(#snrg)"/>
<circle cx="463" cy="153" r="3.6" fill="#ffec00"/>
<line x1="412" y1="162.5" x2="630" y2="162.5" stroke="#e02020" stroke-width="1.4"/>
<line x1="443" y1="160" x2="443" y2="163" stroke="#e02020"/>
<line x1="474" y1="160" x2="474" y2="163" stroke="#e02020"/>
<line x1="505" y1="160" x2="505" y2="163" stroke="#e02020"/>
<line x1="536" y1="160" x2="536" y2="163" stroke="#e02020"/>
<line x1="567" y1="160" x2="567" y2="163" stroke="#e02020"/>
<line x1="598" y1="160" x2="598" y2="163" stroke="#e02020"/>
<line x1="323.5" y1="197" x2="323.5" y2="445" stroke="#d4cc00" stroke-width="1"/>
<path d="M317 437H329L323 449Z" fill="#f0e800"/>
<line x1="336.5" y1="224" x2="336.5" y2="445" stroke="#d4cc00" stroke-width="1"/>
<path d="M330 437H342L336 449Z" fill="#f0e800"/>
<line x1="425.5" y1="251" x2="425.5" y2="445" stroke="#d4cc00" stroke-width="1"/>
<path d="M419 437H431L425 449Z" fill="#f0e800"/>
<line x1="520.5" y1="277" x2="520.5" y2="445" stroke="#d4cc00" stroke-width="1"/>
<path d="M514.5 437H526.5L520.5 449Z" fill="#f0e800"/>
<line x1="693.5" y1="171" x2="693.5" y2="445" stroke="#d4cc00" stroke-width="1"/>
<path d="M687 437H699L693 449Z" fill="#f0e800"/>
<line x1="927.5" y1="197" x2="927.5" y2="445" stroke="#d4cc00" stroke-width="1"/>
<path d="M921 437H933L927 449Z" fill="#f0e800"/>
<line x1="939.5" y1="224" x2="939.5" y2="445" stroke="#d4cc00" stroke-width="1"/>
<path d="M933.5 437H945.5L939.5 449Z" fill="#f0e800"/>
<line x1="951.5" y1="251" x2="951.5" y2="445" stroke="#d4cc00" stroke-width="1"/>
<path d="M945.5 437H957.5L951.5 449Z" fill="#f0e800"/>
<line x1="1185.5" y1="277" x2="1185.5" y2="445" stroke="#d4cc00" stroke-width="1"/>
<path d="M1179.5 437H1191.5L1185.5 449Z" fill="#f0e800"/>
<line x1="1210.5" y1="304" x2="1210.5" y2="445" stroke="#d4cc00" stroke-width="1"/>
<path d="M1204.5 437H1216.5L1210.5 449Z" fill="#f0e800"/>
<line x1="1542.5" y1="171" x2="1542.5" y2="445" stroke="#d4cc00" stroke-width="1"/>
<path d="M1536.5 437H1548.5L1542.5 449Z" fill="#f0e800"/>
<line x1="1554.5" y1="197" x2="1554.5" y2="445" stroke="#d4cc00" stroke-width="1"/>
<path d="M1548 437H1560L1554 449Z" fill="#f0e800"/>
</svg>
<div class="t" style="left:289px;top:157.5px;color:#d8d8d8;font-size:10px;padding:1px 2px">-65 dBm</div>
<div class="t" style="left:289px;top:188.0px;color:#d8d8d8;font-size:10px;padding:1px 2px">-70 dBm</div>
<div class="t" style="left:289px;top:218.5px;color:#d8d8d8;font-size:10px;padding:1px 2px">-75 dBm</div>
<div class="t" style="left:289px;top:249.0px;color:#d8d8d8;font-size:10px;padding:1px 2px">-80 dBm</div>
<div class="t" style="left:289px;top:279.5px;color:#d8d8d8;font-size:10px;padding:1px 2px">-85 dBm</div>
<div class="t" style="left:289px;top:310.0px;color:#d8d8d8;font-size:10px;padding:1px 2px">-90 dBm</div>
<div class="t" style="left:289px;top:340.5px;color:#d8d8d8;font-size:10px;padding:1px 2px">-95 dBm</div>
<div class="t" style="left:289px;top:371.0px;color:#d8d8d8;font-size:10px;padding:1px 2px">-100 dBm</div>
<div class="t" style="left:289px;top:401.5px;color:#d8d8d8;font-size:10px;padding:1px 2px">-105 dBm</div>
<div class="t" style="left:289px;top:432.0px;color:#d8d8d8;font-size:10px;padding:1px 2px">-110 dBm</div>
<div class="t" style="left:1549px;top:218.5px;color:#d8d8d8;font-size:10px;padding:1px 2px">-75 dBm</div>
<div class="t" style="left:1549px;top:249.0px;color:#d8d8d8;font-size:10px;padding:1px 2px">-80 dBm</div>
<div class="t" style="left:1549px;top:279.5px;color:#d8d8d8;font-size:10px;padding:1px 2px">-85 dBm</div>
<div class="t" style="left:1549px;top:310.0px;color:#d8d8d8;font-size:10px;padding:1px 2px">-90 dBm</div>
<div class="t" style="left:1549px;top:340.5px;color:#d8d8d8;font-size:10px;padding:1px 2px">-95 dBm</div>
<div class="t" style="left:1543px;top:371.0px;color:#d8d8d8;font-size:10px;padding:1px 2px">-100 dBm</div>
<div class="t" style="left:1543px;top:401.5px;color:#d8d8d8;font-size:10px;padding:1px 2px">-105 dBm</div>
<div class="t" style="left:1543px;top:432.0px;color:#d8d8d8;font-size:10px;padding:1px 2px">-110 dBm</div>
<div class="t" style="left:1550px;top:157px;color:#aaa;font-size:11px;clip-path:inset(0 0 50% 0)">-65 dBm</div>
<div class="t" style="left:359px;top:152px;color:#fff;font-size:20.5px">32</div>
<div class="t" style="left:389px;top:158px;color:#fff;font-size:12px;font-weight:bold">dB</div>
<div class="t" style="left:612px;top:150px;color:#9a9a9a;font-size:10px">SNR</div>
<div class="t mono" style="left:443px;top:166px;color:#e8e8e8;font-size:9px;transform:translateX(-50%)">20</div>
<div class="t mono" style="left:474px;top:166px;color:#e8e8e8;font-size:9px;transform:translateX(-50%)">40</div>
<div class="t mono" style="left:505px;top:166px;color:#e8e8e8;font-size:9px;transform:translateX(-50%)">60</div>
<div class="t mono" style="left:536px;top:166px;color:#e8e8e8;font-size:9px;transform:translateX(-50%)">80</div>
<div class="t mono" style="left:567px;top:166px;color:#e8e8e8;font-size:9px;transform:translateX(-50%)">100</div>
<div class="t mono" style="left:598px;top:166px;color:#e8e8e8;font-size:9px;transform:translateX(-50%)">120</div>
<div class="a" style="left:421px;top:181px;width:9px;height:268px;background:rgba(38,38,38,.9);border-left:1px solid #8a8a8a;border-right:1px solid #8a8a8a"></div>
<div class="a" style="left:421px;top:181px;width:9px;height:6px;background:#d86a6a"></div>
<div class="a" style="left:421px;top:443px;width:9px;height:6px;background:#b01818"></div>
<div class="a" style="left:418px;top:191px;width:16px;height:15px;background:#2a2a2a;border-radius:3px;color:#fff;font-size:11px;text-align:center;line-height:15px">2</div>
<div class="a" style="left:1160px;top:146px;width:9px;height:304px;background:rgba(30,110,30,.55);border-left:1.5px solid #3cb83c;border-right:1.5px solid #3cb83c"></div>
<div class="a" style="left:1160px;top:146px;width:9px;height:8px;background:#40d040"></div>
<div class="a" style="left:1160px;top:442px;width:9px;height:8px;background:#30a030"></div>
<div class="a" style="left:1157px;top:156px;width:16px;height:16px;background:#0e3a0e;border-radius:3px;color:#fff;font-size:11px;text-align:center;line-height:16px">1</div>
<svg class="a" style="left:0;top:0" width="1920" height="1058" viewBox="0 0 1920 1058">
<polyline points="287,430.9 288,432.8 289,432.7 290,433.4 291,433.6 292,431.7 293,431.6 294,430.3 295,431.4 296,433.9 297,431.9 298,431.9 299,430.5 300,422.9 301,427.7 302,429.2 303,428.6 304,430.5 305,429.4 306,430.9 307,428.3 308,428.2 309,428.6 310,430.0 311,428.7 312,428.1 313,427.1 314,421.3 315,423.5 316,420.1 317,411.5 318,405.4 319,388.0 320,369.6 321,331.0 322,280.4 323,249.8 324,279.4 325,331.8 326,367.3 327,386.6 328,394.3 329,410.7 330,418.4 331,422.2 332,421.9 333,421.6 334,423.8 335,422.3 336,425.3 337,426.1 338,429.0 339,430.6 340,429.9 341,430.6 342,429.9 343,431.4 344,429.8 345,431.2 346,428.8 347,430.1 348,430.4 349,432.5 350,433.0 351,431.3 352,438.2 353,438.8 354,438.0 355,436.0 356,436.2 357,434.1 358,435.8 359,436.2 360,433.3 361,435.6 362,434.8 363,435.2 364,433.4 365,433.5 366,431.4 367,428.3 368,429.1 369,428.9 370,429.4 371,434.2 372,433.2 373,432.8 374,434.2 375,428.2 376,431.5 377,427.4 378,428.8 379,429.9 380,431.9 381,429.0 382,432.0 383,434.3 384,434.5 385,433.8 386,434.3 387,433.0 388,433.4 389,431.5 390,431.7 391,429.9 392,428.7 393,429.4 394,428.6 395,428.6 396,429.4 397,428.8 398,428.8 399,427.6 400,428.4 401,429.1 402,430.7 403,432.7 404,436.2 405,435.3 406,432.6 407,430.8 408,430.2 409,433.9 410,430.8 411,430.4 412,430.4 413,429.5 414,428.8 415,430.8 416,427.1 417,423.1 418,425.9 419,424.0 420,419.8 421,416.8 422,405.0 423,382.8 424,365.0 425,381.5 426,403.6 427,414.7 428,421.1 429,424.3 430,429.8 431,431.4 432,429.4 433,432.2 434,432.6 435,429.4 436,431.2 437,431.5 438,430.5 439,430.8 440,431.5 441,432.7 442,432.0 443,430.4 444,429.5 445,428.5 446,429.7 447,428.7 448,428.0 449,428.1 450,429.0 451,428.3 452,428.5 453,430.7 454,432.6 455,431.3 456,432.1 457,431.2 458,426.5 459,433.7 460,432.2 461,428.7 462,434.2 463,435.0 464,436.1 465,438.1 466,436.9 467,432.4 468,432.2 469,431.6 470,432.0 471,433.8 472,431.8 473,431.8 474,436.4 475,434.9 476,431.2 477,430.5 478,428.9 479,429.8 480,429.9 481,420.8 482,429.5 483,429.7 484,430.5 485,433.5 486,431.5 487,428.9 488,431.7 489,430.2 490,429.7 491,430.0 492,431.9 493,429.5 494,432.0 495,433.7 496,434.1 497,433.7 498,435.1 499,434.3 500,431.7 501,431.7 502,436.6 503,435.3 504,434.0 505,432.4 506,435.4 507,434.2 508,432.6 509,434.0 510,431.0 511,432.5 512,433.5 513,434.8 514,434.3 515,432.5 516,433.9 517,429.5 518,427.8 519,428.9 520,430.1 521,431.0 522,428.4 523,423.5 524,429.6 525,432.2 526,435.2 527,432.7 528,429.8 529,431.9 530,431.1 531,431.5 532,432.3 533,434.6 534,432.9 535,434.1 536,435.3 537,433.6 538,432.0 539,433.4 540,431.7 541,433.9 542,435.2 543,439.3 544,436.5 545,433.5 546,435.3 547,436.8 548,437.5 549,436.7 550,434.3 551,434.8 552,429.0 553,432.9 554,431.5 555,432.6 556,432.0 557,435.1 558,434.0 559,432.7 560,433.4 561,432.7 562,429.7 563,428.9 564,426.9 565,427.1 566,428.7 567,429.3 568,429.9 569,426.6 570,426.9 571,424.5 572,416.3 573,425.2 574,424.4 575,426.5 576,426.1 577,428.7 578,428.9 579,429.8 580,428.4 581,427.2 582,427.9 583,427.3 584,423.1 585,427.2 586,425.2 587,428.5 588,428.9 589,427.1 590,425.2 591,423.5 592,425.8 593,424.8 594,427.2 595,428.1 596,429.5 597,428.8 598,426.2 599,427.3 600,432.1 601,428.2 602,428.0 603,429.7 604,426.9 605,426.6 606,426.5 607,423.1 608,427.5 609,427.7 610,428.6 611,431.5 612,428.8 613,430.0 614,431.0 615,429.1 616,430.7 617,432.1 618,428.8 619,428.2 620,431.3 621,428.0 622,430.2 623,430.6 624,428.2 625,426.8 626,424.8 627,423.3 628,419.0 629,416.5 630,408.9 631,392.5 632,366.6 633,312.0 634,287.4 635,321.8 636,366.0 637,393.0 638,406.3 639,412.4 640,419.3 641,421.2 642,423.4 643,423.6 644,425.6 645,426.0 646,425.5 647,426.8 648,428.0 649,427.8 650,426.4 651,427.0 652,428.4 653,427.0 654,429.3 655,432.5 656,430.6 657,430.2 658,419.3 659,427.2 660,426.3 661,429.4 662,428.2 663,430.6 664,428.9 665,427.1 666,428.1 667,425.9 668,425.2 669,427.5 670,427.6 671,421.7 672,428.0 673,429.5 674,430.0 675,431.6 676,429.0 677,430.1 678,434.0 679,430.2 680,430.8 681,430.2 682,430.4 683,431.4 684,430.8 685,431.2 686,433.5 687,432.9 688,433.0 689,434.6 690,433.2 691,431.1 692,429.9 693,429.6 694,430.2 695,430.4 696,433.2 697,432.6 698,435.8 699,432.6 700,429.9 701,429.2 702,431.1 703,432.8 704,433.0 705,434.6 706,433.4 707,433.7 708,434.3 709,434.3 710,433.4 711,430.5 712,431.6 713,432.3 714,432.9 715,434.3 716,434.4 717,432.7 718,431.0 719,431.3 720,432.7 721,432.8 722,434.9 723,433.7 724,432.4 725,434.6 726,433.2 727,431.5 728,430.9 729,430.1 730,430.4 731,429.8 732,429.6 733,426.3 734,427.5 735,424.4 736,427.7 737,426.9 738,425.0 739,422.2 740,416.7 741,407.5 742,393.7 743,367.2 744,322.2 745,285.3 746,313.4 747,347.4 748,344.0 749,353.1 750,393.0 751,404.7 752,417.9 753,420.6 754,422.8 755,426.7 756,428.8 757,427.0 758,428.2 759,428.9 760,428.7 761,431.1 762,433.1 763,430.6 764,433.3 765,432.4 766,435.5 767,435.3 768,433.1 769,431.0 770,432.0 771,429.2 772,430.5 773,430.6 774,429.3 775,428.7 776,430.6 777,428.0 778,428.2 779,428.3 780,432.6 781,430.3 782,427.0 783,421.8 784,426.0 785,424.6 786,426.9 787,425.2 788,425.0 789,424.8 790,424.3 791,422.2 792,425.6 793,426.5 794,426.2 795,426.6 796,428.5 797,427.9 798,424.4 799,425.9 800,425.7 801,425.3 802,425.3 803,427.9 804,425.5 805,426.4 806,423.6 807,421.8 808,421.7 809,420.2 810,418.5 811,413.9 812,407.6 813,394.5 814,369.4 815,329.9 816,298.0 817,323.0 818,366.9 819,391.3 820,402.9 821,412.5 822,415.8 823,420.6 824,423.8 825,422.9 826,424.6 827,423.9 828,425.6 829,427.0 830,429.5 831,430.2 832,429.8 833,421.4 834,426.4 835,428.5 836,430.3 837,427.5 838,429.4 839,429.2 840,431.3 841,429.0 842,432.0 843,432.7 844,432.1 845,433.9 846,434.5 847,432.8 848,431.9 849,437.1 850,436.6 851,433.8 852,434.2 853,435.8 854,427.8 855,434.8 856,431.0 857,433.3 858,432.9 859,436.1 860,435.5 861,432.7 862,433.7 863,433.2 864,432.5 865,432.6 866,432.7 867,431.3 868,430.6 869,430.1 870,431.2 871,430.6 872,432.5 873,434.0 874,435.1 875,433.0 876,430.9 877,431.6 878,428.0 879,431.6 880,433.1 881,432.5 882,432.0 883,433.8 884,431.6 885,431.6 886,432.7 887,435.4 888,432.3 889,435.2 890,436.9 891,431.6 892,427.7 893,437.0 894,436.5 895,436.3 896,434.8 897,432.8 898,430.9 899,430.4 900,431.4 901,432.9 902,433.0 903,432.6 904,432.9 905,434.1 906,433.6 907,431.9 908,430.9 909,431.6 910,431.9 911,430.3 912,428.5 913,428.2 914,427.1 915,426.0 916,426.7 917,425.8 918,427.3 919,429.9 920,427.5 921,427.2 922,426.5 923,427.2 924,428.2 925,433.8 926,430.4 927,431.4 928,427.8 929,425.9 930,424.7 931,421.3 932,420.8 933,411.0 934,403.0 935,376.9 936,353.5 937,361.3 938,359.6 939,335.1 940,314.7 941,345.6 942,382.2 943,404.8 944,414.5 945,417.6 946,422.0 947,425.7 948,429.3 949,427.5 950,431.0 951,429.5 952,430.6 953,428.0 954,426.9 955,424.0 956,427.4 957,425.0 958,429.1 959,430.2 960,430.5 961,428.9 962,429.3 963,432.4 964,437.0 965,435.6 966,435.0 967,433.1 968,433.9 969,438.2 970,436.3 971,433.8 972,434.8 973,432.6 974,433.1 975,431.5 976,434.1 977,432.8 978,433.0 979,430.4 980,424.1 981,433.5 982,431.8 983,432.3 984,432.3 985,431.1 986,428.0 987,428.0 988,432.4 989,433.5 990,435.0 991,435.3 992,434.2 993,436.1 994,433.0 995,435.1 996,434.9 997,433.0 998,430.3 999,431.1 1000,432.2 1001,432.2 1002,424.6 1003,431.9 1004,430.4 1005,431.0 1006,430.2 1007,429.4 1008,430.7 1009,428.8 1010,425.7 1011,421.4 1012,410.1 1013,376.0 1014,370.3 1015,391.8 1016,364.5 1017,277.9 1018,331.9 1019,330.7 1020,382.5 1021,410.2 1022,422.3 1023,425.6 1024,431.1 1025,432.6 1026,431.6 1027,431.0 1028,430.4 1029,431.7 1030,430.8 1031,432.2 1032,429.8 1033,430.9 1034,432.2 1035,432.5 1036,434.4 1037,430.3 1038,429.8 1039,428.0 1040,424.6 1041,419.4 1042,417.0 1043,411.2 1044,403.9 1045,393.0 1046,367.6 1047,322.2 1048,288.9 1049,312.2 1050,333.0 1051,332.8 1052,370.4 1053,396.2 1054,405.7 1055,414.2 1056,416.8 1057,419.3 1058,421.5 1059,421.4 1060,424.4 1061,425.0 1062,425.1 1063,426.8 1064,431.0 1065,429.8 1066,430.6 1067,426.8 1068,428.1 1069,429.1 1070,431.6 1071,430.9 1072,431.0 1073,431.2 1074,430.2 1075,428.6 1076,427.6 1077,429.0 1078,428.2 1079,429.5 1080,429.7 1081,428.5 1082,429.1 1083,428.0 1084,427.0 1085,428.6 1086,429.5 1087,429.2 1088,427.1 1089,428.0 1090,430.7 1091,430.7 1092,428.7 1093,428.9 1094,428.5 1095,428.8 1096,424.4 1097,426.3 1098,428.4 1099,427.9 1100,427.2 1101,425.8 1102,425.6 1103,427.2 1104,427.6 1105,428.5 1106,430.8 1107,430.6 1108,429.7 1109,429.8 1110,431.1 1111,429.8 1112,428.6 1113,427.7 1114,430.8 1115,431.6 1116,431.1 1117,429.2 1118,427.9 1119,427.4 1120,429.2 1121,429.6 1122,429.1 1123,430.7 1124,430.3 1125,430.7 1126,432.9 1127,431.7 1128,432.8 1129,432.4 1130,432.8 1131,435.0 1132,436.6 1133,430.9 1134,435.7 1135,435.1 1136,433.7 1137,433.5 1138,432.5 1139,427.8 1140,431.8 1141,433.8 1142,433.6 1143,431.9 1144,432.6 1145,432.1 1146,429.5 1147,427.3 1148,428.5 1149,428.1 1150,429.5 1151,429.9 1152,424.4 1153,425.4 1154,423.4 1155,420.9 1156,419.9 1157,417.4 1158,410.3 1159,401.0 1160,382.9 1161,354.8 1162,332.2 1163,349.2 1164,377.1 1165,383.2 1166,381.2 1167,397.3 1168,414.0 1169,424.2 1170,425.7 1171,429.8 1172,423.6 1173,430.4 1174,429.7 1175,429.9 1176,430.5 1177,428.7 1178,429.7 1179,431.7 1180,435.6 1181,431.4 1182,431.7 1183,431.7 1184,432.0 1185,435.2 1186,435.3 1187,436.0 1188,435.6 1189,434.2 1190,433.1 1191,433.5 1192,428.2 1193,434.3 1194,428.6 1195,433.8 1196,431.6 1197,436.7 1198,438.1 1199,433.6 1200,433.8 1201,436.2 1202,433.4 1203,434.2 1204,433.4 1205,433.3 1206,435.4 1207,435.8 1208,434.4 1209,435.7 1210,436.5 1211,428.5 1212,435.0 1213,434.5 1214,432.1 1215,435.4 1216,434.3 1217,438.2 1218,440.4 1219,436.7 1220,434.7 1221,438.3 1222,438.4 1223,438.6 1224,434.0 1225,436.4 1226,436.2 1227,435.6 1228,435.8 1229,434.8 1230,435.8 1231,433.3 1232,432.3 1233,432.0 1234,433.2 1235,433.9 1236,434.2 1237,434.6 1238,436.8 1239,433.2 1240,432.5 1241,434.1 1242,433.3 1243,435.5 1244,425.8 1245,433.8 1246,437.1 1247,434.8 1248,435.7 1249,435.1 1250,435.4 1251,436.3 1252,436.9 1253,434.0 1254,434.0 1255,432.7 1256,433.3 1257,431.5 1258,434.7 1259,434.9 1260,432.4 1261,431.3 1262,433.6 1263,429.4 1264,434.9 1265,428.7 1266,428.3 1267,431.5 1268,429.3 1269,428.7 1270,430.5 1271,431.6 1272,433.3 1273,431.3 1274,428.8 1275,429.2 1276,430.0 1277,430.6 1278,430.0 1279,431.0 1280,421.6 1281,433.0 1282,433.7 1283,431.0 1284,431.8 1285,433.8 1286,434.5 1287,434.4 1288,434.4 1289,434.4 1290,434.6 1291,434.0 1292,436.9 1293,435.5 1294,436.3 1295,434.8 1296,434.6 1297,432.8 1298,433.3 1299,433.6 1300,432.6 1301,431.3 1302,430.8 1303,433.3 1304,435.7 1305,435.2 1306,430.7 1307,431.8 1308,432.4 1309,431.9 1310,430.2 1311,429.7 1312,430.6 1313,429.6 1314,429.4 1315,428.7 1316,429.2 1317,431.4 1318,421.5 1319,429.9 1320,425.0 1321,431.7 1322,430.9 1323,435.1 1324,433.7 1325,431.9 1326,431.4 1327,431.3 1328,431.7 1329,433.9 1330,433.7 1331,432.6 1332,432.9 1333,431.5 1334,431.1 1335,429.6 1336,428.3 1337,429.8 1338,430.0 1339,426.0 1340,425.4 1341,426.8 1342,427.7 1343,422.0 1344,426.9 1345,425.7 1346,426.5 1347,424.6 1348,427.4 1349,427.0 1350,424.3 1351,425.9 1352,418.5 1353,424.0 1354,425.2 1355,425.6 1356,423.7 1357,425.6 1358,425.7 1359,425.1 1360,427.3 1361,428.5 1362,428.1 1363,428.0 1364,429.3 1365,431.3 1366,432.3 1367,432.3 1368,433.0 1369,430.7 1370,432.3 1371,430.0 1372,431.6 1373,433.3 1374,430.0 1375,431.7 1376,431.0 1377,432.1 1378,432.3 1379,430.5 1380,429.5 1381,427.8 1382,431.8 1383,431.8 1384,430.5 1385,430.9 1386,430.3 1387,431.2 1388,430.2 1389,432.1 1390,431.7 1391,432.6 1392,431.5 1393,430.4 1394,430.3 1395,423.7 1396,423.3 1397,429.7 1398,429.9 1399,429.4 1400,429.1 1401,432.8 1402,431.7 1403,432.6 1404,433.2 1405,426.5 1406,434.8 1407,436.3 1408,434.8 1409,435.6 1410,435.5 1411,435.5 1412,430.8 1413,433.9 1414,428.7 1415,433.8 1416,432.1 1417,435.5 1418,433.3 1419,433.4 1420,431.8 1421,432.6 1422,434.8 1423,433.9 1424,426.8 1425,433.2 1426,432.8 1427,433.3 1428,430.7 1429,428.6 1430,428.1 1431,428.4 1432,429.8 1433,429.4 1434,430.9 1435,434.1 1436,433.5 1437,435.6 1438,436.7 1439,437.2 1440,434.8 1441,437.3 1442,438.6 1443,438.2 1444,436.0 1445,437.6 1446,437.0 1447,435.4 1448,434.2 1449,437.8 1450,437.4 1451,438.2 1452,439.0 1453,436.6 1454,435.4 1455,435.0 1456,434.9 1457,436.5 1458,434.6 1459,434.5 1460,433.4 1461,433.1 1462,433.1 1463,431.9 1464,428.4 1465,428.4 1466,429.6 1467,431.8 1468,430.5 1469,432.0 1470,429.8 1471,432.3 1472,432.3 1473,429.0 1474,429.2 1475,430.0 1476,429.4 1477,430.2 1478,426.2 1479,428.9 1480,430.4 1481,430.2 1482,429.5 1483,432.5 1484,431.8 1485,432.4 1486,432.5 1487,431.3 1488,428.5 1489,430.8 1490,431.6 1491,429.0 1492,427.0 1493,428.7 1494,430.3 1495,430.3 1496,432.9 1497,432.9 1498,434.4 1499,435.2 1500,432.5 1501,432.3 1502,432.8 1503,431.8 1504,433.2 1505,433.2 1506,428.5 1507,430.9 1508,429.9 1509,427.7 1510,430.3 1511,431.4 1512,433.8 1513,425.4 1514,434.0 1515,437.0 1516,436.2 1517,433.8 1518,435.0 1519,435.9 1520,435.7 1521,432.9 1522,435.2 1523,432.6 1524,431.7 1525,434.2 1526,431.3 1527,428.9 1528,430.2 1529,430.5 1530,429.8 1531,428.9 1532,429.1 1533,430.9 1534,432.2 1535,430.5 1536,424.1 1537,426.8 1538,426.3 1539,426.0 1540,427.9 1541,428.5 1542,427.9 1543,427.7 1544,425.7 1545,422.4 1546,422.5 1547,415.4 1548,410.4 1549,402.8 1550,389.1 1551,376.6 1552,342.0 1553,287.9 1554,251.7 1555,284.8 1556,342.0 1557,376.9 1558,391.9 1559,407.4 1560,412.6 1561,416.0 1562,422.4 1563,425.5 1564,426.8 1565,428.5 1566,430.8 1567,434.1 1568,435.2 1569,433.7 1570,430.8 1571,434.6 1572,433.4 1573,433.4 1574,433.3 1575,431.9 1576,431.7 1577,430.9 1578,430.4 1579,430.0 1580,430.3 1581,433.4 1582,433.9 1583,434.2 1584,431.6 1585,431.3 1586,430.0 1587,423.2 1588,424.0 1589,413.1 1590,403.5 1591,412.4 1592,425.3" fill="none" stroke="#e6e6e6" stroke-width="1.1"/>
<line x1="323" y1="197" x2="323" y2="234" stroke="#bbb" stroke-width="1" stroke-dasharray="1.5 1.5"/>
<path d="M316 234H330L323 247Z" fill="#000" stroke="#e0e0e0" stroke-width="1.2"/>
<line x1="424" y1="316" x2="424" y2="354" stroke="#bbb" stroke-width="1" stroke-dasharray="1.5 1.5"/>
<path d="M417 354H431L424 367Z" fill="#000" stroke="#e0e0e0" stroke-width="1.2"/>
<line x1="634" y1="246" x2="634" y2="277" stroke="#bbb" stroke-width="1" stroke-dasharray="1.5 1.5"/>
<path d="M627 277H641L634 290Z" fill="#000" stroke="#e0e0e0" stroke-width="1.2"/>
<line x1="745" y1="273" x2="745" y2="278" stroke="#bbb" stroke-width="1" stroke-dasharray="1.5 1.5"/>
<path d="M738 278H752L745 291Z" fill="#000" stroke="#e0e0e0" stroke-width="1.2"/>
<line x1="816" y1="211" x2="816" y2="289" stroke="#bbb" stroke-width="1" stroke-dasharray="1.5 1.5"/>
<path d="M809 289H823L816 302Z" fill="#000" stroke="#e0e0e0" stroke-width="1.2"/>
<line x1="940" y1="257" x2="940" y2="305" stroke="#bbb" stroke-width="1" stroke-dasharray="1.5 1.5"/>
<path d="M933 305H947L940 318Z" fill="#000" stroke="#e0e0e0" stroke-width="1.2"/>
<line x1="1014" y1="278" x2="1014" y2="370" stroke="#bbb" stroke-width="1" stroke-dasharray="1.5 1.5"/>
<path d="M1007 370H1021L1014 383Z" fill="#000" stroke="#e0e0e0" stroke-width="1.2"/>
<line x1="1048" y1="223" x2="1048" y2="284" stroke="#bbb" stroke-width="1" stroke-dasharray="1.5 1.5"/>
<path d="M1041 284H1055L1048 297Z" fill="#000" stroke="#e0e0e0" stroke-width="1.2"/>
<line x1="1162" y1="235" x2="1162" y2="326" stroke="#bbb" stroke-width="1" stroke-dasharray="1.5 1.5"/>
<path d="M1155 326H1169L1162 339Z" fill="#000" stroke="#e0e0e0" stroke-width="1.2"/>
<line x1="1554" y1="202" x2="1554" y2="238" stroke="#bbb" stroke-width="1" stroke-dasharray="1.5 1.5"/>
<path d="M1547 238H1561L1554 251Z" fill="#000" stroke="#e0e0e0" stroke-width="1.2"/>
</svg>
<div class="t" style="left:323px;top:177px;transform:translateX(-50%);background:#050505;color:#fff;font-size:13.5px;padding:3px 3px 3px">31.3</div>
<div class="t" style="left:424px;top:296px;transform:translateX(-50%);background:#050505;color:#fff;font-size:13.5px;padding:3px 3px 3px">12.0</div>
<div class="t" style="left:634px;top:226px;transform:translateX(-50%);background:#050505;color:#fff;font-size:13.5px;padding:3px 3px 3px">24.0</div>
<div class="t" style="left:745px;top:253px;transform:translateX(-50%);background:#050505;color:#fff;font-size:13.5px;padding:3px 3px 3px">18.5</div>
<div class="t" style="left:816px;top:191px;transform:translateX(-50%);background:#050505;color:#fff;font-size:13.5px;padding:3px 3px 3px">29.0</div>
<div class="t" style="left:940px;top:237px;transform:translateX(-50%);background:#050505;color:#fff;font-size:13.5px;padding:3px 3px 3px">21.9</div>
<div class="t" style="left:1014px;top:258px;transform:translateX(-50%);background:#050505;color:#fff;font-size:13.5px;padding:3px 3px 3px">20.0</div>
<div class="t" style="left:1048px;top:203px;transform:translateX(-50%);background:#050505;color:#fff;font-size:13.5px;padding:3px 3px 3px">27.9</div>
<div class="t" style="left:1162px;top:215px;transform:translateX(-50%);background:#050505;color:#fff;font-size:13.5px;padding:3px 3px 3px">25.0</div>
<div class="t" style="left:1554px;top:182px;transform:translateX(-50%);background:#050505;color:#fff;font-size:13.5px;padding:3px 3px 3px">30.8</div>
<div class="t" style="left:324px;top:191px;color:#e0e000;font-size:9.6px;background:#090909;padding:1px 3px 2px">CW Beacon LO</div>
<div class="t" style="left:337px;top:218px;color:#e0e000;font-size:9.6px;background:#090909;padding:1px 3px 2px">CW &gt;</div>
<div class="t" style="left:424px;top:245px;color:#e0e000;font-size:9.6px;background:#090909;padding:1px 3px 2px">NB Digi &gt;</div>
<div class="t" style="left:522px;top:271px;color:#e0e000;font-size:9.6px;background:#090909;padding:1px 3px 2px">Digi &gt;</div>
<div class="t" style="left:694px;top:165px;color:#e0e000;font-size:9.6px;background:#090909;padding:1px 3px 2px">SSB &gt;</div>
<div class="t" style="left:928px;top:191px;color:#e0e000;font-size:9.6px;background:#090909;padding:1px 3px 2px">Guard &gt;</div>
<div class="t" style="left:940px;top:218px;color:#e0e000;font-size:9.6px;background:#090909;padding:1px 3px 2px">PSK Beacon</div>
<div class="t" style="left:953px;top:245px;color:#e0e000;font-size:9.6px;background:#090909;padding:1px 3px 2px">SSB &gt;</div>
<div class="t" style="left:1187px;top:271px;color:#e0e000;font-size:9.6px;background:#090909;padding:1px 3px 2px">Mixed &gt;</div>
<div class="t" style="left:1211px;top:298px;color:#e0e000;font-size:9.6px;background:#090909;padding:1px 3px 2px">Emergency QRG</div>
<div class="t" style="left:1544px;top:165px;color:#e0e000;font-size:9.6px;background:#090909;padding:1px 3px 2px">Guard &gt;</div>
<div class="t" style="left:1569px;top:191px;color:#e0e000;font-size:9.6px;background:#080808;padding:0 2px">/ Bea</div>
<div class="a" style="left:287px;top:450px;width:1305px;height:11px;background:linear-gradient(#5e5e5e,#2a2a2a)"></div>
<svg class="a" style="left:0;top:0" width="1920" height="460"><line x1="274.1" y1="450" x2="274.1" y2="453.5" stroke="#a0a0a0" stroke-width="1.2"/><line x1="298.8" y1="450" x2="298.8" y2="453.5" stroke="#a0a0a0" stroke-width="1.2"/><line x1="323.4" y1="450" x2="323.4" y2="456" stroke="#a0a0a0" stroke-width="1.6"/><line x1="348.0" y1="450" x2="348.0" y2="453.5" stroke="#a0a0a0" stroke-width="1.2"/><line x1="372.7" y1="450" x2="372.7" y2="453.5" stroke="#a0a0a0" stroke-width="1.2"/><line x1="397.3" y1="450" x2="397.3" y2="453.5" stroke="#a0a0a0" stroke-width="1.2"/><line x1="422.0" y1="450" x2="422.0" y2="453.5" stroke="#a0a0a0" stroke-width="1.2"/><line x1="446.6" y1="450" x2="446.6" y2="456" stroke="#a0a0a0" stroke-width="1.6"/><line x1="471.2" y1="450" x2="471.2" y2="453.5" stroke="#a0a0a0" stroke-width="1.2"/><line x1="495.9" y1="450" x2="495.9" y2="453.5" stroke="#a0a0a0" stroke-width="1.2"/><line x1="520.5" y1="450" x2="520.5" y2="453.5" stroke="#a0a0a0" stroke-width="1.2"/><line x1="545.2" y1="450" x2="545.2" y2="453.5" stroke="#a0a0a0" stroke-width="1.2"/><line x1="569.8" y1="450" x2="569.8" y2="456" stroke="#a0a0a0" stroke-width="1.6"/><line x1="594.4" y1="450" x2="594.4" y2="453.5" stroke="#a0a0a0" stroke-width="1.2"/><line x1="619.1" y1="450" x2="619.1" y2="453.5" stroke="#a0a0a0" stroke-width="1.2"/><line x1="643.7" y1="450" x2="643.7" y2="453.5" stroke="#a0a0a0" stroke-width="1.2"/><line x1="668.4" y1="450" x2="668.4" y2="453.5" stroke="#a0a0a0" stroke-width="1.2"/><line x1="693.0" y1="450" x2="693.0" y2="456" stroke="#a0a0a0" stroke-width="1.6"/><line x1="717.6" y1="450" x2="717.6" y2="453.5" stroke="#a0a0a0" stroke-width="1.2"/><line x1="742.3" y1="450" x2="742.3" y2="453.5" stroke="#a0a0a0" stroke-width="1.2"/><line x1="766.9" y1="450" x2="766.9" y2="453.5" stroke="#a0a0a0" stroke-width="1.2"/><line x1="791.6" y1="450" x2="791.6" y2="453.5" stroke="#a0a0a0" stroke-width="1.2"/><line x1="816.2" y1="450" x2="816.2" y2="456" stroke="#a0a0a0" stroke-width="1.6"/><line x1="840.8" y1="450" x2="840.8" y2="453.5" stroke="#a0a0a0" stroke-width="1.2"/><line x1="865.5" y1="450" x2="865.5" y2="453.5" stroke="#a0a0a0" stroke-width="1.2"/><line x1="890.1" y1="450" x2="890.1" y2="453.5" stroke="#a0a0a0" stroke-width="1.2"/><line x1="914.8" y1="450" x2="914.8" y2="453.5" stroke="#a0a0a0" stroke-width="1.2"/><line x1="939.4" y1="450" x2="939.4" y2="456" stroke="#a0a0a0" stroke-width="1.6"/><line x1="964.0" y1="450" x2="964.0" y2="453.5" stroke="#a0a0a0" stroke-width="1.2"/><line x1="988.7" y1="450" x2="988.7" y2="453.5" stroke="#a0a0a0" stroke-width="1.2"/><line x1="1013.3" y1="450" x2="1013.3" y2="453.5" stroke="#a0a0a0" stroke-width="1.2"/><line x1="1038.0" y1="450" x2="1038.0" y2="453.5" stroke="#a0a0a0" stroke-width="1.2"/><line x1="1062.6" y1="450" x2="1062.6" y2="456" stroke="#a0a0a0" stroke-width="1.6"/><line x1="1087.2" y1="450" x2="1087.2" y2="453.5" stroke="#a0a0a0" stroke-width="1.2"/><line x1="1111.9" y1="450" x2="1111.9" y2="453.5" stroke="#a0a0a0" stroke-width="1.2"/><line x1="1136.5" y1="450" x2="1136.5" y2="453.5" stroke="#a0a0a0" stroke-width="1.2"/><line x1="1161.2" y1="450" x2="1161.2" y2="453.5" stroke="#a0a0a0" stroke-width="1.2"/><line x1="1185.8" y1="450" x2="1185.8" y2="456" stroke="#a0a0a0" stroke-width="1.6"/><line x1="1210.4" y1="450" x2="1210.4" y2="453.5" stroke="#a0a0a0" stroke-width="1.2"/><line x1="1235.1" y1="450" x2="1235.1" y2="453.5" stroke="#a0a0a0" stroke-width="1.2"/><line x1="1259.7" y1="450" x2="1259.7" y2="453.5" stroke="#a0a0a0" stroke-width="1.2"/><line x1="1284.4" y1="450" x2="1284.4" y2="453.5" stroke="#a0a0a0" stroke-width="1.2"/><line x1="1309.0" y1="450" x2="1309.0" y2="456" stroke="#a0a0a0" stroke-width="1.6"/><line x1="1333.6" y1="450" x2="1333.6" y2="453.5" stroke="#a0a0a0" stroke-width="1.2"/><line x1="1358.3" y1="450" x2="1358.3" y2="453.5" stroke="#a0a0a0" stroke-width="1.2"/><line x1="1382.9" y1="450" x2="1382.9" y2="453.5" stroke="#a0a0a0" stroke-width="1.2"/><line x1="1407.6" y1="450" x2="1407.6" y2="453.5" stroke="#a0a0a0" stroke-width="1.2"/><line x1="1432.2" y1="450" x2="1432.2" y2="456" stroke="#a0a0a0" stroke-width="1.6"/><line x1="1456.8" y1="450" x2="1456.8" y2="453.5" stroke="#a0a0a0" stroke-width="1.2"/><line x1="1481.5" y1="450" x2="1481.5" y2="453.5" stroke="#a0a0a0" stroke-width="1.2"/><line x1="1506.1" y1="450" x2="1506.1" y2="453.5" stroke="#a0a0a0" stroke-width="1.2"/><line x1="1530.8" y1="450" x2="1530.8" y2="453.5" stroke="#a0a0a0" stroke-width="1.2"/><line x1="1555.4" y1="450" x2="1555.4" y2="456" stroke="#a0a0a0" stroke-width="1.6"/><line x1="1580.0" y1="450" x2="1580.0" y2="453.5" stroke="#a0a0a0" stroke-width="1.2"/><line x1="1604.7" y1="450" x2="1604.7" y2="453.5" stroke="#a0a0a0" stroke-width="1.2"/></svg>
<div class="a" style="left:287px;top:461px;width:1305px;height:10px;background:#000"></div>
<div class="t" style="left:323px;top:459px;color:#f0f0f0;font-size:10px;transform:translateX(-50%)">10489.500</div>
<div class="t" style="left:447px;top:459px;color:#f0f0f0;font-size:10px;transform:translateX(-50%)">10489.550</div>
<div class="t" style="left:570px;top:459px;color:#f0f0f0;font-size:10px;transform:translateX(-50%)">10489.600</div>
<div class="t" style="left:693px;top:459px;color:#f0f0f0;font-size:10px;transform:translateX(-50%)">10489.650</div>
<div class="t" style="left:816px;top:459px;color:#f0f0f0;font-size:10px;transform:translateX(-50%)">10489.700</div>
<div class="t" style="left:939px;top:459px;color:#f0f0f0;font-size:10px;transform:translateX(-50%)">10489.750</div>
<div class="t" style="left:1063px;top:459px;color:#f0f0f0;font-size:10px;transform:translateX(-50%)">10489.800</div>
<div class="t" style="left:1186px;top:459px;color:#f0f0f0;font-size:10px;transform:translateX(-50%)">10489.850</div>
<div class="t" style="left:1309px;top:459px;color:#f0f0f0;font-size:10px;transform:translateX(-50%)">10489.900</div>
<div class="t" style="left:1432px;top:459px;color:#f0f0f0;font-size:10px;transform:translateX(-50%)">10489.950</div>
<div class="t" style="left:1555px;top:459px;color:#f0f0f0;font-size:10px;transform:translateX(-50%)">10490.000</div>
<div class="a" style="left:287px;top:471px;width:1305px;height:6px;background:#eeeeee"></div>
<div class="a" style="left:907px;top:473px;width:63px;height:2px;background:repeating-linear-gradient(90deg,#6a6a6a 0 2px,transparent 2px 4px)"></div>
<svg class="a" style="left:287px;top:477px" width="1305" height="529" viewBox="287 477 1305 529">
<defs><filter id="wn" x="0" y="0" width="100%" height="100%" color-interpolation-filters="sRGB"><feTurbulence type="fractalNoise" baseFrequency="1.5" numOctaves="2" seed="5"/><feColorMatrix values="1 0 0 0 -0.31  1.33 0 0 0 -0.39  1.95 0 0 0 -0.405  0 0 0 0 1"/></filter><filter id="yn" x="0" y="0" width="100%" height="100%" color-interpolation-filters="sRGB"><feTurbulence type="fractalNoise" baseFrequency="0.95" numOctaves="1" seed="9"/><feColorMatrix values="0 0 0 0 1  0 0 0 0 1  0 0 0 0 0  9 0 0 0 -6.9"/></filter><filter id="yn2" x="0" y="0" width="100%" height="100%" color-interpolation-filters="sRGB"><feTurbulence type="fractalNoise" baseFrequency="0.95" numOctaves="1" seed="13"/><feColorMatrix values="0 0 0 0 1  0 0 0 0 1  0 0 0 0 0  8 0 0 0 -5.2"/></filter><filter id="hn" x="0" y="0" width="100%" height="100%" color-interpolation-filters="sRGB"><feTurbulence type="fractalNoise" baseFrequency="1.2 0.4" numOctaves="1" seed="21"/><feColorMatrix values="8 0 0 0 -3.1  8 0 0 0 -3.1  8 0 0 0 -3.1  0 0 0 0 1"/></filter><filter id="hn2" x="0" y="0" width="100%" height="100%" color-interpolation-filters="sRGB"><feTurbulence type="fractalNoise" baseFrequency="1.1 0.5" numOctaves="1" seed="23"/><feColorMatrix values="14 0 0 0 -4.9  14 0 0 0 -4.9  14 0 0 0 -4.9  0 0 0 0 1"/></filter><mask id="hm2" maskUnits="userSpaceOnUse" x="287" y="477" width="1305" height="422"><rect x="287" y="477" width="1305" height="422" filter="url(#hn2)"/></mask><linearGradient id="bg2" x1="0" y1="0" x2="0" y2="1"><stop offset="0" stop-color="#fff" stop-opacity="0"/><stop offset="1" stop-color="#fff" stop-opacity="1"/></linearGradient><mask id="bm" maskUnits="userSpaceOnUse" x="287" y="860" width="1305" height="39"><rect x="287" y="860" width="1305" height="39" fill="url(#bg2)"/></mask><mask id="hm" maskUnits="userSpaceOnUse" x="287" y="477" width="1305" height="422"><rect x="287" y="477" width="1305" height="422" filter="url(#hn)"/></mask></defs>
<rect x="287" y="477" width="1305" height="116" filter="url(#wn)"/>
<rect x="287" y="593" width="1305" height="306" fill="#fff"/>
<rect x="287" y="593" width="1305" height="306" filter="url(#yn)"/>
<rect x="287" y="860" width="1305" height="39" filter="url(#yn2)" mask="url(#bm)"/>
<rect x="287" y="899" width="1305" height="107" fill="#000222"/>
<rect x="323.5" y="477" width="2" height="422" fill="#ffff00"/>
<rect x="424.5" y="477" width="1.2" height="116" fill="#d0dcff"/><rect x="427" y="538" width="1.2" height="55" fill="#e8eeff"/>
<rect x="423" y="593" width="2" height="306" fill="#ff0"/><rect x="426" y="593" width="2" height="306" fill="#ff0"/>
<line x1="421.5" y1="593" x2="421.5" y2="899" stroke="#777" stroke-dasharray="3 2"/><line x1="429.5" y1="593" x2="429.5" y2="899" stroke="#777" stroke-dasharray="3 2"/>
<line x1="421.5" y1="899" x2="421.5" y2="1005" stroke="#bbb" stroke-dasharray="3 2"/><line x1="429.5" y1="899" x2="429.5" y2="1005" stroke="#bbb" stroke-dasharray="3 2"/>
<rect x="634" y="477" width="3.5" height="116" fill="#fff"/><rect x="634" y="593" width="3.5" height="306" fill="#ff0"/>
<rect x="938.5" y="477" width="3" height="116" fill="#fff"/><rect x="938.5" y="593" width="3" height="306" fill="#ff0"/>
<rect x="1554.5" y="477" width="1.5" height="422" fill="#ff0"/>
<rect x="714" y="541" width="4" height="34" rx="2" fill="#dfe6ff"/>
<rect x="690" y="730" width="1" height="169" fill="#ee0"/><rect x="692.5" y="735" width="1" height="164" fill="#ee0"/>
<g mask="url(#hm)"><rect x="745.4" y="477" width="4" height="23" fill="#dfe8ff"/><rect x="745.0" y="555" width="4" height="18" fill="#dfe8ff"/><rect x="745.4" y="573" width="4" height="15" fill="#dfe8ff"/><rect x="745.4" y="588" width="4" height="5" fill="#dfe8ff"/><rect x="816.4" y="477" width="5" height="11" fill="#dfe8ff"/><rect x="815.6" y="488" width="5" height="8" fill="#dfe8ff"/><rect x="816.3" y="496" width="5" height="13" fill="#dfe8ff"/><rect x="816.4" y="509" width="5" height="16" fill="#dfe8ff"/><rect x="815.8" y="525" width="5" height="22" fill="#dfe8ff"/><rect x="815.9" y="547" width="5" height="6" fill="#dfe8ff"/><rect x="816.1" y="553" width="5" height="14" fill="#dfe8ff"/><rect x="815.8" y="567" width="5" height="8" fill="#dfe8ff"/><rect x="815.4" y="575" width="5" height="13" fill="#dfe8ff"/><rect x="815.9" y="588" width="5" height="5" fill="#dfe8ff"/><rect x="866.7" y="497" width="5" height="12" fill="#dfe8ff"/><rect x="866.4" y="509" width="5" height="8" fill="#dfe8ff"/><rect x="866.5" y="517" width="5" height="19" fill="#dfe8ff"/><rect x="866.4" y="536" width="5" height="13" fill="#dfe8ff"/><rect x="866.6" y="549" width="5" height="20" fill="#dfe8ff"/><rect x="867.0" y="569" width="5" height="23" fill="#dfe8ff"/><rect x="866.9" y="592" width="5" height="1" fill="#dfe8ff"/><rect x="1013.6" y="477" width="7" height="116" fill="#dfe8ff"/><rect x="1026.5" y="495" width="5" height="28" fill="#dfe8ff"/><rect x="1026.6" y="523" width="5" height="16" fill="#dfe8ff"/><rect x="1025.5" y="539" width="5" height="29" fill="#dfe8ff"/><rect x="1025.7" y="568" width="5" height="14" fill="#dfe8ff"/><rect x="1025.8" y="582" width="5" height="11" fill="#dfe8ff"/><rect x="1049.0" y="477" width="6" height="116" fill="#dfe8ff"/><rect x="1160.5" y="477" width="7" height="9" fill="#aabfff"/><rect x="1159.5" y="520" width="7" height="5" fill="#aabfff"/><rect x="1159.8" y="525" width="7" height="7" fill="#aabfff"/><rect x="1160.1" y="532" width="7" height="7" fill="#aabfff"/><rect x="1160.5" y="545" width="7" height="9" fill="#aabfff"/><rect x="1160.0" y="554" width="7" height="16" fill="#aabfff"/></g><g mask="url(#hm2)"><rect x="744.6" y="593" width="5" height="40" fill="#ffff00"/><rect x="744.9" y="686" width="5" height="47" fill="#ffff00"/><rect x="693.1" y="838" width="4" height="44" fill="#ffff00"/><rect x="815.5" y="593" width="7" height="142" fill="#ffff00"/><rect x="815.5" y="755" width="7" height="35" fill="#ffff00"/><rect x="815.6" y="797" width="7" height="43" fill="#ffff00"/><rect x="815.1" y="850" width="7" height="49" fill="#ffff00"/><rect x="865.7" y="593" width="7" height="306" fill="#ffff00"/><rect x="1012" y="593" width="9" height="306" fill="#ffff00"/><rect x="1025" y="593" width="8" height="306" fill="#ffff00"/><rect x="1035.7" y="598" width="6" height="12" fill="#ffff00"/><rect x="1036.1" y="610" width="6" height="30" fill="#ffff00"/><rect x="1035.6" y="640" width="6" height="21" fill="#ffff00"/><rect x="1036.1" y="661" width="6" height="28" fill="#ffff00"/><rect x="1036.2" y="689" width="6" height="37" fill="#ffff00"/><rect x="1036.3" y="745" width="6" height="36" fill="#ffff00"/><rect x="1036.5" y="781" width="6" height="15" fill="#ffff00"/><rect x="1035.9" y="796" width="6" height="16" fill="#ffff00"/><rect x="1035.9" y="812" width="6" height="18" fill="#ffff00"/><rect x="1048.2" y="593" width="7" height="26" fill="#ffff00"/><rect x="1048.5" y="619" width="7" height="26" fill="#ffff00"/><rect x="1047.6" y="645" width="7" height="41" fill="#ffff00"/><rect x="1048.0" y="686" width="7" height="14" fill="#ffff00"/><rect x="1047.7" y="700" width="7" height="49" fill="#ffff00"/><rect x="1047.5" y="749" width="7" height="23" fill="#ffff00"/><rect x="1047.5" y="772" width="7" height="36" fill="#ffff00"/><rect x="1048.0" y="808" width="7" height="21" fill="#ffff00"/><rect x="1047.6" y="829" width="7" height="18" fill="#ffff00"/><rect x="1160.2" y="601" width="6" height="26" fill="#ffff00"/><rect x="1160.1" y="627" width="6" height="20" fill="#ffff00"/><rect x="1159.5" y="647" width="6" height="10" fill="#ffff00"/><rect x="1160.3" y="673" width="6" height="18" fill="#ffff00"/><rect x="1160.0" y="691" width="6" height="26" fill="#ffff00"/><rect x="1160.3" y="717" width="6" height="25" fill="#ffff00"/><rect x="1159.5" y="742" width="6" height="8" fill="#ffff00"/><rect x="1160.2" y="750" width="6" height="8" fill="#ffff00"/><rect x="1160.2" y="758" width="6" height="23" fill="#ffff00"/><rect x="1159.4" y="781" width="6" height="23" fill="#ffff00"/><rect x="1160.1" y="804" width="6" height="17" fill="#ffff00"/><rect x="1160.5" y="821" width="6" height="24" fill="#ffff00"/><rect x="1159.7" y="897" width="6" height="2" fill="#ffff00"/><rect x="1161" y="593" width="2.5" height="306" fill="#ffff00"/></g>
<line x1="1160.5" y1="593" x2="1160.5" y2="1005" stroke="#3a8a3a" stroke-dasharray="3 2"/><line x1="1167.5" y1="477" x2="1167.5" y2="1005" stroke="#558855" stroke-dasharray="3 2"/>
</svg></div>
<div class="a" style="left:1592px;top:144px;width:39px;height:890px;background:#000"></div>
<div class="a" style="left:1593px;top:144px;width:37px;height:30px;background:linear-gradient(#4a4a4a 0%,#2a2a2a 40%,#111 41%,#0a0a0a 100%);border:1px solid #3a3a3a"><div style="position:absolute;left:0;right:0;top:8px;text-align:center;color:#fff;font-size:11.5px">Auto</div></div>
<div class="a" style="left:1631px;top:144px;width:5px;height:890px;background:#e9edf8"></div>
<div class="a" style="left:1595px;top:591px;width:34px;height:177px;background:linear-gradient(#f0f000 0%,#ffffa0 8%,#fff 14%,#fff 40%,#d8e0ff 52%,#7a9cff 62%,#3a52b0 75%,#1a2050 88%,#050828 100%)"></div>
<div class="a" style="left:1595px;top:767px;width:34px;height:2px;background:#fff"></div>
<div class="t" style="left:1612px;top:223px;color:#bbb;font-size:8.5px;transform:translateX(-50%)">-10</div>
<div class="t" style="left:1612px;top:277px;color:#bbb;font-size:8.5px;transform:translateX(-50%)">-20</div>
<div class="t" style="left:1612px;top:330px;color:#bbb;font-size:8.5px;transform:translateX(-50%)">-30</div>
<div class="t" style="left:1612px;top:384px;color:#bbb;font-size:8.5px;transform:translateX(-50%)">-40</div>
<div class="t" style="left:1612px;top:438px;color:#bbb;font-size:8.5px;transform:translateX(-50%)">-50</div>
<div class="t" style="left:1612px;top:492px;color:#bbb;font-size:8.5px;transform:translateX(-50%)">-60</div>
<div class="t" style="left:1612px;top:545px;color:#bbb;font-size:8.5px;transform:translateX(-50%)">-70</div>
<div class="a" style="left:1599px;top:595px;width:26px;height:17px;background:#7a7a50;border-radius:4px"></div>
<div class="t" style="left:1612px;top:599px;color:#ddd;font-size:8.5px;transform:translateX(-50%)">-80</div>
<div class="a" style="left:1599px;top:649px;width:26px;height:17px;background:#707070;border-radius:4px"></div>
<div class="t" style="left:1612px;top:653px;color:#ddd;font-size:8.5px;transform:translateX(-50%)">-90</div>
<div class="a" style="left:1599px;top:702px;width:26px;height:17px;background:#2e3a7a;border-radius:4px"></div>
<div class="t" style="left:1612px;top:706px;color:#ddd;font-size:8.5px;transform:translateX(-50%)">-100</div>
<div class="a" style="left:1599px;top:756px;width:26px;height:12px;background:#101840;border-radius:4px"></div>
<div class="t" style="left:1612px;top:760px;color:#ddd;font-size:8.5px;transform:translateX(-50%)">-110</div>
<div class="t" style="left:1612px;top:814px;color:#bbb;font-size:8.5px;transform:translateX(-50%)">-120</div>
<div class="t" style="left:1612px;top:867px;color:#bbb;font-size:8.5px;transform:translateX(-50%)">-130</div>
<div class="t" style="left:1612px;top:921px;color:#bbb;font-size:8.5px;transform:translateX(-50%)">-140</div>
<div class="t" style="left:1612px;top:975px;color:#bbb;font-size:8.5px;transform:translateX(-50%)">-150</div>
<div class="a" style="left:287px;top:1006px;width:1305px;height:27px;background:#000"></div>
<div class="a" style="left:287px;top:1006px;width:1305px;height:1px;background:#777"></div>
<div class="a" style="left:289px;top:1007px;width:24px;height:25px;background:#e6e6e6;border:1px solid #9a9a9a"><svg class="a" style="left:3px;top:4px" width="17" height="17" viewBox="0 0 17 17"><circle cx="8.5" cy="8.5" r="7" fill="#fff" stroke="#222" stroke-width="1.6"/><path d="M4.5 8.5L8 5.5V11.5ZM8 8.5L11.5 5.5V11.5Z" fill="#222"/></svg></div>
<div class="a" style="left:314px;top:1007px;width:1159px;height:13px;background:linear-gradient(#3e3e3e,#262626)"></div>
<div class="a" style="left:604px;top:1007px;width:580px;height:26px;background:linear-gradient(#555 0%,#3c3c3c 45%,#2a2a2a 70%,#3a3a20 100%)"></div>
<div class="a" style="left:604px;top:1007px;width:2px;height:26px;background:#888"></div>
<div class="a" style="left:1183px;top:1007px;width:2px;height:26px;background:#999"></div>
<div class="a" style="left:606px;top:1019px;width:577px;height:14px;background:radial-gradient(ellipse 50% 90% at 50% 100%,rgba(215,205,30,.85) 0%,rgba(170,160,20,.5) 45%,rgba(0,0,0,0) 100%)"></div>
<div class="a" style="left:892px;top:1007px;width:2px;height:26px;background:#d8d010"></div>
<svg class="a" style="left:0;top:0" width="1920" height="1058"><line x1="335.6" y1="1007" x2="335.6" y2="1010" stroke="#8a8a8a" stroke-width="1"/><line x1="357.5" y1="1007" x2="357.5" y2="1010" stroke="#8a8a8a" stroke-width="1"/><line x1="379.4" y1="1007" x2="379.4" y2="1010" stroke="#8a8a8a" stroke-width="1"/><line x1="401.3" y1="1007" x2="401.3" y2="1010" stroke="#8a8a8a" stroke-width="1"/><line x1="423.2" y1="1007" x2="423.2" y2="1010" stroke="#8a8a8a" stroke-width="1"/><line x1="445.1" y1="1007" x2="445.1" y2="1010" stroke="#8a8a8a" stroke-width="1"/><line x1="467.0" y1="1007" x2="467.0" y2="1010" stroke="#8a8a8a" stroke-width="1"/><line x1="488.9" y1="1007" x2="488.9" y2="1010" stroke="#8a8a8a" stroke-width="1"/><line x1="510.8" y1="1007" x2="510.8" y2="1012" stroke="#8a8a8a" stroke-width="1.5"/><line x1="532.7" y1="1007" x2="532.7" y2="1010" stroke="#8a8a8a" stroke-width="1"/><line x1="554.6" y1="1007" x2="554.6" y2="1010" stroke="#8a8a8a" stroke-width="1"/><line x1="576.5" y1="1007" x2="576.5" y2="1010" stroke="#8a8a8a" stroke-width="1"/><line x1="598.4" y1="1007" x2="598.4" y2="1010" stroke="#8a8a8a" stroke-width="1"/><line x1="620.3" y1="1007" x2="620.3" y2="1010" stroke="#8a8a8a" stroke-width="1"/><line x1="642.2" y1="1007" x2="642.2" y2="1010" stroke="#8a8a8a" stroke-width="1"/><line x1="664.1" y1="1007" x2="664.1" y2="1010" stroke="#8a8a8a" stroke-width="1"/><line x1="686.0" y1="1007" x2="686.0" y2="1010" stroke="#8a8a8a" stroke-width="1"/><line x1="707.9" y1="1007" x2="707.9" y2="1010" stroke="#8a8a8a" stroke-width="1"/><line x1="729.8" y1="1007" x2="729.8" y2="1012" stroke="#8a8a8a" stroke-width="1.5"/><line x1="751.7" y1="1007" x2="751.7" y2="1010" stroke="#8a8a8a" stroke-width="1"/><line x1="773.6" y1="1007" x2="773.6" y2="1010" stroke="#8a8a8a" stroke-width="1"/><line x1="795.5" y1="1007" x2="795.5" y2="1010" stroke="#8a8a8a" stroke-width="1"/><line x1="817.4" y1="1007" x2="817.4" y2="1010" stroke="#8a8a8a" stroke-width="1"/><line x1="839.3" y1="1007" x2="839.3" y2="1010" stroke="#8a8a8a" stroke-width="1"/><line x1="861.2" y1="1007" x2="861.2" y2="1010" stroke="#8a8a8a" stroke-width="1"/><line x1="883.1" y1="1007" x2="883.1" y2="1010" stroke="#8a8a8a" stroke-width="1"/><line x1="905.0" y1="1007" x2="905.0" y2="1010" stroke="#8a8a8a" stroke-width="1"/><line x1="926.9" y1="1007" x2="926.9" y2="1010" stroke="#8a8a8a" stroke-width="1"/><line x1="948.8" y1="1007" x2="948.8" y2="1012" stroke="#8a8a8a" stroke-width="1.5"/><line x1="970.7" y1="1007" x2="970.7" y2="1010" stroke="#8a8a8a" stroke-width="1"/><line x1="992.6" y1="1007" x2="992.6" y2="1010" stroke="#8a8a8a" stroke-width="1"/><line x1="1014.5" y1="1007" x2="1014.5" y2="1010" stroke="#8a8a8a" stroke-width="1"/><line x1="1036.4" y1="1007" x2="1036.4" y2="1010" stroke="#8a8a8a" stroke-width="1"/><line x1="1058.3" y1="1007" x2="1058.3" y2="1010" stroke="#8a8a8a" stroke-width="1"/><line x1="1080.2" y1="1007" x2="1080.2" y2="1010" stroke="#8a8a8a" stroke-width="1"/><line x1="1102.1" y1="1007" x2="1102.1" y2="1010" stroke="#8a8a8a" stroke-width="1"/><line x1="1124.0" y1="1007" x2="1124.0" y2="1010" stroke="#8a8a8a" stroke-width="1"/><line x1="1145.9" y1="1007" x2="1145.9" y2="1010" stroke="#8a8a8a" stroke-width="1"/><line x1="1167.8" y1="1007" x2="1167.8" y2="1012" stroke="#8a8a8a" stroke-width="1.5"/><line x1="1189.7" y1="1007" x2="1189.7" y2="1010" stroke="#8a8a8a" stroke-width="1"/><line x1="1211.6" y1="1007" x2="1211.6" y2="1010" stroke="#8a8a8a" stroke-width="1"/><line x1="1233.5" y1="1007" x2="1233.5" y2="1010" stroke="#8a8a8a" stroke-width="1"/><line x1="1255.4" y1="1007" x2="1255.4" y2="1010" stroke="#8a8a8a" stroke-width="1"/><line x1="1277.3" y1="1007" x2="1277.3" y2="1010" stroke="#8a8a8a" stroke-width="1"/><line x1="1299.2" y1="1007" x2="1299.2" y2="1010" stroke="#8a8a8a" stroke-width="1"/><line x1="1321.1" y1="1007" x2="1321.1" y2="1010" stroke="#8a8a8a" stroke-width="1"/><line x1="1343.0" y1="1007" x2="1343.0" y2="1010" stroke="#8a8a8a" stroke-width="1"/><line x1="1364.9" y1="1007" x2="1364.9" y2="1010" stroke="#8a8a8a" stroke-width="1"/><line x1="1386.8" y1="1007" x2="1386.8" y2="1012" stroke="#8a8a8a" stroke-width="1.5"/><line x1="1408.7" y1="1007" x2="1408.7" y2="1010" stroke="#8a8a8a" stroke-width="1"/><line x1="1430.6" y1="1007" x2="1430.6" y2="1010" stroke="#8a8a8a" stroke-width="1"/><line x1="1452.5" y1="1007" x2="1452.5" y2="1010" stroke="#8a8a8a" stroke-width="1"/></svg>
<div class="t" style="left:510px;top:1017px;color:#d8d8d8;font-size:12px;transform:translateX(-50%)">10489.400</div>
<div class="t" style="left:729px;top:1017px;color:#d8d8d8;font-size:12px;transform:translateX(-50%)">10489.600</div>
<div class="t" style="left:948px;top:1017px;color:#d8d8d8;font-size:12px;transform:translateX(-50%)">10489.800</div>
<div class="t" style="left:1167px;top:1017px;color:#d8d8d8;font-size:12px;transform:translateX(-50%)">10490.000</div>
<div class="t" style="left:1386px;top:1017px;color:#d8d8d8;font-size:12px;transform:translateX(-50%)">10490.200</div>
<div class="a" style="left:1473px;top:1006px;width:119px;height:27px;background:#dcdcdc"></div>
<div class="a" style="left:1475px;top:1007px;width:36px;height:26px;background:#e6e6e6;border:1px solid #a8a8a8"><svg class="a" style="left:9px;top:6px" width="17" height="13" viewBox="0 0 17 13"><rect x=".5" y="4.5" width="16" height="8" fill="#fff" stroke="#333"/><path d="M2.5 7H14.5M2.5 10H14.5" stroke="#333" stroke-dasharray="1.5 1"/><path d="M8.5 4.5V1.5H13" fill="none" stroke="#333"/></svg></div>
<div class="a" style="left:1514px;top:1007px;width:49px;height:26px;background:#e6e6e6;border:1px solid #a8a8a8"><div class="t" style="left:9px;top:7px">x2</div><svg class="a" style="left:37px;top:8px" width="6" height="9"><path d="M0 0L5 4.5L0 9Z" fill="#000"/></svg></div>
<div class="a" style="left:1566px;top:1007px;width:25px;height:26px;background:#e6e6e6;border:1px solid #a8a8a8"><svg class="a" style="left:3px;top:4px" width="17" height="17" viewBox="0 0 17 17"><circle cx="8.5" cy="8.5" r="7" fill="#fff" stroke="#222" stroke-width="1.6"/><path d="M12.5 8.5L9 5.5V11.5ZM9 8.5L5.5 5.5V11.5Z" fill="#222"/></svg></div>
<div class="a" style="left:0px;top:1034px;width:1920px;height:24px;background:#f0f0f0;border-top:1px solid #dadada"></div>
<div class="t" style="left:9px;top:1040px;color:#6a6a6a">PlutoSDR LAN, BW = 1.200 MHz</div>
<div class="t" style="left:1270px;top:1040px;">CPU: 4.4%</div>
<div class="a" style="left:1334px;top:1041px;width:70px;height:12px;background:#e6e6e6;border:1px solid #bcbcbc"></div>
<div class="t" style="left:1418px;top:1040px;">GPU: 5.2%</div>
<div class="a" style="left:1490px;top:1041px;width:70px;height:12px;background:#e6e6e6;border:1px solid #bcbcbc"><div class="a" style="left:1px;top:1px;width:2px;height:8px;background:#06b025"></div></div>
<div class="t" style="left:1574px;top:1040px;">Audio: 30ms</div>
<div class="a" style="left:1651px;top:1041px;width:70px;height:12px;background:#e6e6e6;border:1px solid #bcbcbc"><div class="a" style="left:2px;top:2px;width:23px;height:6px;background:#06b025"></div></div>
<div class="t" style="left:1735px;top:1040px;">Size: 1000.3 MB</div>
<div class="a" style="left:1827px;top:1041px;width:70px;height:12px;background:#e6e6e6;border:1px solid #bcbcbc"><div class="a" style="left:1px;top:1px;width:2px;height:8px;background:#06b025"></div></div>
<svg class="a" style="left:1906px;top:1044px" width="12" height="12"><g fill="#bbb"><rect x="9" y="1" width="2" height="2"/><rect x="5" y="5" width="2" height="2"/><rect x="9" y="5" width="2" height="2"/><rect x="1" y="9" width="2" height="2"/><rect x="5" y="9" width="2" height="2"/><rect x="9" y="9" width="2" height="2"/></g></svg>
<div class="a" style="left:1636px;top:144px;width:282px;height:890px;background:#e3e3e3"></div>
<div class="a" style="left:1918px;top:144px;width:2px;height:890px;background:#f4f4f4"></div>
<div class="ph" style="left:1636px;top:144px;width:282px;height:20px;"></div>
<div class="t" style="left:1640px;top:148px;">Transmit</div>
<svg class="a" style="left:1888px;top:151px" width="9" height="6"><path d="M0 0H9L4.5 5.5Z" fill="#000"/></svg>
<svg class="a" style="left:1905px;top:149px" width="9" height="9"><path d="M1 1L8 8M8 1L1 8" stroke="#000" stroke-width="1.6"/></svg>
<div class="a" style="left:1636px;top:164px;width:282px;height:264px;background:#000"></div>
<div class="t" style="left:1639px;top:167px;color:#e0e000;font-size:11.6px">TX</div>
<svg class="a" style="left:1660px;top:168px" width="10" height="9"><path d="M0 9H10L5 0Z" fill="#e8e000"/></svg>
<div class="t" style="left:1674px;top:167px;color:#e0e000;font-size:11.6px">8089.5 MHz</div>
<div class="t" style="left:1915px;top:167px;color:#e0e000;font-size:11.6px;transform:translateX(-100%)">100 - 2800 Hz</div>
<div class="t mono" style="left:1644px;top:192px;color:#fff;font-size:28px;letter-spacing:0.2px;transform:scaleY(1.17);transform-origin:0 0;-webkit-text-stroke:0.4px #fff">10.489.840.000</div>
<div class="bb" style="left:1645px;top:248px;width:69px;height:23px;line-height:21px;font-size:12px;font-weight:bold;color:#fff;"><div class="a" style="left:8%;right:8%;bottom:0;height:9px;border-radius:50% 50% 0 0/100% 100% 0 0;background:radial-gradient(ellipse at 50% 100%,#d8d000 0%,#8a8400 50%,rgba(0,0,0,0) 80%)"></div><span style="position:relative">Sync RX</span></div>
<div class="bb" style="left:1723px;top:248px;width:69px;height:23px;line-height:21px;color:#6a6a6a">RX &#9658; TX</div>
<div class="bb" style="left:1795px;top:248px;width:69px;height:23px;line-height:21px;color:#6a6a6a">TX &#9658; RX</div>
<div class="bb" style="left:1645px;top:289px;width:69px;height:23px;line-height:21px;font-size:11px;"><span style="position:relative">Sync RX</span></div>
<div class="bb" style="left:1723px;top:289px;width:30px;height:23px;line-height:21px;font-size:11px;"><span style="position:relative">LSB</span></div>
<div class="bb" style="left:1756px;top:289px;width:30px;height:23px;line-height:21px;font-size:12px;font-weight:bold;color:#fff;"><div class="a" style="left:8%;right:8%;bottom:0;height:9px;border-radius:50% 50% 0 0/100% 100% 0 0;background:radial-gradient(ellipse at 50% 100%,#d8d000 0%,#8a8400 50%,rgba(0,0,0,0) 80%)"></div><span style="position:relative">USB</span></div>
<div class="bb" style="left:1789px;top:289px;width:30px;height:23px;line-height:21px;font-size:11px;"><span style="position:relative">AM</span></div>
<div class="bb" style="left:1822px;top:289px;width:30px;height:23px;line-height:21px;font-size:11px;"><span style="position:relative">FM</span></div>
<div class="bb" style="left:1855px;top:289px;width:30px;height:23px;line-height:21px;font-size:11px;"><span style="position:relative">CW</span></div>
<div class="bb" style="left:1645px;top:329px;width:60px;height:52px;background:linear-gradient(#484848 0%,#303030 48%,#0a0a0a 49%,#000 100%);line-height:48px;font-size:15px;color:#fff">TX</div>
<div class="bb" style="left:1714px;top:329px;width:45px;height:22px;line-height:20px;font-size:11px;"><span style="position:relative">Tone</span></div>
<div class="bb" style="left:1762px;top:329px;width:45px;height:22px;line-height:20px;font-size:11px;"><span style="position:relative">Tune</span></div>
<div class="bb" style="left:1810px;top:329px;width:24px;height:22px;line-height:20px;font-size:10px;font-weight:bold;color:#fff"><span style="position:relative">&#8226;&#8226;&#8226;</span></div>
<div class="t mono" style="left:1717px;top:361px;color:#777;font-size:11px">3cm Proc</div>
<div class="t" style="left:1651px;top:402px;color:#fff">Drive</div>
<div class="a" style="left:1690px;top:407px;width:155px;height:3px;background:#d8d8d8;border-radius:2px"></div>
<div class="a" style="left:1775px;top:398px;width:14px;height:19px;background:linear-gradient(#f6f6f6,#cfcfcf);border:1px solid #888;border-radius:3px"><div class="a" style="left:4px;top:4px;width:4px;height:9px;border-left:1px solid #888;border-right:1px solid #888"></div></div>
<div class="t" style="left:1869px;top:403px;color:#fff">60</div>
<div class="hdr" style="left:1636px;top:430px;width:282px;height:16px;line-height:18px;padding-left:2px">Meter</div><svg class="a" style="left:1903px;top:435px" width="8" height="5"><path d="M0 4.5H7L3.5 0.5Z" fill="#000"/></svg>
<div class="a" style="left:1636px;top:446px;width:282px;height:40px;background:#000"></div>
<div class="t" style="left:1643px;top:461px;color:#eee;font-style:italic;font-size:11px">ALC</div>
<div class="a" style="left:1674px;top:456px;width:18px;height:7px;background:repeating-linear-gradient(90deg,#ccc 0 3px,transparent 3px 4.5px)"></div>
<div class="a" style="left:1674px;top:464px;width:218px;height:2px;background:#888"></div>
<div class="a" style="left:1787px;top:464px;width:78px;height:2px;background:#e01010"></div>
<div class="a" style="left:1825px;top:455px;width:1px;height:10px;background:#ddd"></div>
<div class="a" style="left:1674px;top:464px;width:1px;height:4px;background:#aaa"></div>
<div class="t mono" style="left:1674px;top:469px;color:#ddd;font-size:8px;font-style:italic;transform:translateX(-30%)">0</div>
<div class="a" style="left:1712px;top:464px;width:1px;height:4px;background:#aaa"></div>
<div class="t mono" style="left:1712px;top:469px;color:#ddd;font-size:8px;font-style:italic;transform:translateX(-30%)">25</div>
<div class="a" style="left:1750px;top:464px;width:1px;height:4px;background:#aaa"></div>
<div class="t mono" style="left:1750px;top:469px;color:#ddd;font-size:8px;font-style:italic;transform:translateX(-30%)">50</div>
<div class="a" style="left:1787px;top:464px;width:1px;height:4px;background:#aaa"></div>
<div class="t mono" style="left:1787px;top:469px;color:#ddd;font-size:8px;font-style:italic;transform:translateX(-30%)">75</div>
<div class="a" style="left:1825px;top:464px;width:1px;height:4px;background:#aaa"></div>
<div class="t mono" style="left:1825px;top:469px;color:#ddd;font-size:8px;font-style:italic;transform:translateX(-30%)">100</div>
<div class="a" style="left:1863px;top:464px;width:1px;height:4px;background:#aaa"></div>
<div class="t mono" style="left:1863px;top:469px;color:#ddd;font-size:8px;font-style:italic;transform:translateX(-30%)">125</div>
<div class="hdr" style="left:1636px;top:488px;width:282px;height:16px;line-height:18px;padding-left:2px">Microphone: Gain 55, Boost 20.0 dB, Proc 40</div><svg class="a" style="left:1903px;top:493px" width="8" height="5"><path d="M0 4.5H7L3.5 0.5Z" fill="#000"/></svg>
<div class="a" style="left:1636px;top:504px;width:282px;height:239px;background:#f0f0f0"></div>
<div class="a" style="left:1640px;top:508px;width:79px;height:24px;background:#cce4f7;border:1px solid #1a5fb4;text-align:center;line-height:22px">Normal</div>
<div class="wb" style="left:1724px;top:508px;width:79px;height:24px;line-height:22px">DX</div>
<div class="wb" style="left:1808px;top:508px;width:79px;height:24px;line-height:22px">Other</div>
<div class="wb" style="left:1640px;top:544px;width:34px;height:24px;"><svg class="a" style="left:8px;top:3px" width="18" height="17" viewBox="0 0 18 17"><path d="M3 15L11 7" stroke="#888" stroke-width="2.2"/><circle cx="12.5" cy="5" r="3.6" fill="#999"/></svg></div>
<div class="a" style="left:1679px;top:544px;width:210px;height:24px;background:#e5e5e5;border:1px solid #adadad"></div>
<div class="t" style="left:1681px;top:550px;font-size:10.6px">Kopfhöremikrofon (Plantronics C620-M)</div>
<svg class="a" style="left:1875px;top:554px" width="9" height="5"><path d="M0 0H9L4.5 5Z" fill="#000"/></svg>
<div class="a" style="left:1640px;top:573px;width:34px;height:24px;background:#cce4f7;border:1px solid #1a5fb4;line-height:22px;text-align:center">Proc</div>
<div class="wb" style="left:1679px;top:573px;width:34px;height:24px;line-height:22px">VOX</div>
<div class="a" style="left:1718px;top:573px;width:97px;height:24px;background:#e5e5e5;border:1px solid #adadad"></div>
<div class="t" style="left:1740px;top:579px;">2.7kHz</div>
<svg class="a" style="left:1800px;top:583px" width="9" height="5"><path d="M0 0H9L4.5 5Z" fill="#000"/></svg>
<div class="wb" style="left:1820px;top:573px;width:70px;height:24px;"><svg class="a" style="left:5px;top:4px" width="16" height="16"><circle cx="8" cy="8" r="6.5" fill="#fff" stroke="#555"/><circle cx="8" cy="8" r="3.5" fill="#e02020"/></svg><div class="t" style="left:27px;top:6px">Record</div></div>
<div class="t" style="left:1645px;top:619px;">Gain</div>
<div class="a" style="left:1683px;top:623px;width:172px;height:6px;background:#fbfbfb;border:1px solid #cfcfcf;border-radius:3px"></div>
<div class="a" style="left:1683px;top:623px;width:93px;height:6px;background:#c2c2c2;border:1px solid #b8b8b8;border-radius:3px"></div>
<div class="a" style="left:1770px;top:615px;width:14px;height:19px;background:linear-gradient(#f8f8f8,#dcdcdc);border:1px solid #b4b4b4;border-radius:3px"><div class="a" style="left:4px;top:4px;width:4px;height:9px;border-left:1px solid #aaa;border-right:1px solid #aaa"></div></div>
<div class="t" style="left:1891px;top:620px;transform:translateX(-100%)">55</div>
<div class="t" style="left:1645px;top:649px;">Proc</div>
<div class="a" style="left:1683px;top:653px;width:172px;height:6px;background:#fbfbfb;border:1px solid #cfcfcf;border-radius:3px"></div>
<div class="a" style="left:1683px;top:653px;width:67px;height:6px;background:#c2c2c2;border:1px solid #b8b8b8;border-radius:3px"></div>
<div class="a" style="left:1744px;top:645px;width:14px;height:19px;background:linear-gradient(#f8f8f8,#dcdcdc);border:1px solid #b4b4b4;border-radius:3px"><div class="a" style="left:4px;top:4px;width:4px;height:9px;border-left:1px solid #aaa;border-right:1px solid #aaa"></div></div>
<div class="t" style="left:1891px;top:650px;transform:translateX(-100%)">40</div>
<div class="t" style="left:1645px;top:688px;">VOX Gain</div>
<div class="a" style="left:1713px;top:692px;width:142px;height:6px;background:#fbfbfb;border:1px solid #cfcfcf;border-radius:3px"></div>
<div class="a" style="left:1721px;top:684px;width:14px;height:19px;background:linear-gradient(#f8f8f8,#dcdcdc);border:1px solid #b4b4b4;border-radius:3px"><div class="a" style="left:4px;top:4px;width:4px;height:9px;border-left:1px solid #aaa;border-right:1px solid #aaa"></div></div>
<div class="t" style="left:1891px;top:689px;transform:translateX(-100%)">11</div>
<div class="t" style="left:1645px;top:717px;">VOX Hang</div>
<div class="a" style="left:1713px;top:721px;width:142px;height:6px;background:#fbfbfb;border:1px solid #cfcfcf;border-radius:3px"></div>
<div class="a" style="left:1713px;top:721px;width:142px;height:6px;background:#c2c2c2;border:1px solid #b8b8b8;border-radius:3px"></div>
<div class="a" style="left:1774px;top:713px;width:14px;height:19px;background:linear-gradient(#f8f8f8,#dcdcdc);border:1px solid #b4b4b4;border-radius:3px"><div class="a" style="left:4px;top:4px;width:4px;height:9px;border-left:1px solid #aaa;border-right:1px solid #aaa"></div></div>
<div class="t" style="left:1891px;top:718px;transform:translateX(-100%)">500</div>
<div class="a" style="left:1645px;top:676px;width:239px;height:1px;background:#a8a8a8"></div>
<div class="hdr" style="left:1636px;top:743px;width:282px;height:18px;line-height:21px;padding-left:3px">CTCSS</div>
<svg class="a" style="left:1906px;top:748px" width="8" height="5"><path d="M0 0.5H7L3.5 4.5Z" fill="#000"/></svg>
<div class="hdr" style="left:1636px;top:762px;width:282px;height:18px;line-height:21px;padding-left:3px">Spectrum</div>
<svg class="a" style="left:1906px;top:767px" width="8" height="5"><path d="M0 0.5H7L3.5 4.5Z" fill="#000"/></svg>
<div class="hdr" style="left:1636px;top:780px;width:282px;height:18px;line-height:21px;padding-left:3px">Monitor</div>
<div class="a" style="left:1906px;top:783px;width:11px;height:11px;background:#f4f4f4;border:1px solid #c4c4c4"><svg class="a" style="left:2px;top:3px" width="7" height="5"><path d="M0 4.5H7L3.5 0.5Z" fill="#000"/></svg></div>
<div class="a" style="left:1636px;top:797px;width:282px;height:67px;background:#f0f0f0"></div>
<div class="a" style="left:1640px;top:801px;width:250px;height:24px;background:#e5e5e5;border:1px solid #adadad"></div>
<div class="t" style="left:1652px;top:807px;font-size:10.7px">Lautsprecher (High Definition Audio Device)</div>
<svg class="a" style="left:1875px;top:811px" width="9" height="5"><path d="M0 0H9L4.5 5Z" fill="#000"/></svg>
<div class="wb" style="left:1640px;top:834px;width:25px;height:24px;line-height:22px">TX</div>
<div class="wb" style="left:1670px;top:834px;width:25px;height:24px;line-height:22px">RX</div>
<div class="a" style="left:1720px;top:845px;width:135px;height:4px;background:#e8e8e8;border:1px solid #cfcfcf;border-radius:3px"></div>
<div class="a" style="left:1752px;top:837px;width:14px;height:19px;background:linear-gradient(#f8f8f8,#dcdcdc);border:1px solid #b4b4b4;border-radius:3px"><div class="a" style="left:4px;top:4px;width:4px;height:9px;border-left:1px solid #aaa;border-right:1px solid #aaa"></div></div>
<div class="t" style="left:1891px;top:842px;transform:translateX(-100%)">29</div>
<div class="hdr" style="left:1636px;top:864px;width:282px;height:18px;line-height:21px;padding-left:3px">Text</div>
<svg class="a" style="left:1906px;top:869px" width="8" height="5"><path d="M0 4.5H7L3.5 0.5Z" fill="#000"/></svg>
<div class="a" style="left:1636px;top:882px;width:282px;height:37px;background:#f0f0f0"></div>
<div class="a" style="left:1642px;top:889px;width:162px;height:21px;background:#fff;border:1px solid #7a7a7a"></div>
<div class="t mono" style="left:1647px;top:893px;font-size:11.5px">Test Test</div>
<svg class="a" style="left:1789px;top:896px" width="10" height="6"><path d="M1 1L5 5L9 1" fill="none" stroke="#444" stroke-width="1.2"/></svg>
<div class="wb" style="left:1814px;top:890px;width:23px;height:21px;"><svg class="a" style="left:7px;top:5px" width="9" height="10"><path d="M0 0L9 5L0 10Z" fill="#000"/></svg></div>
<div class="wb" style="left:1841px;top:890px;width:23px;height:21px;"><div class="a" style="left:6px;top:5px;width:9px;height:9px;background:#000"></div></div>
<div class="wb" style="left:1868px;top:890px;width:23px;height:21px;"><svg class="a" style="left:4px;top:8px" width="14" height="4"><circle cx="2" cy="2" r="1.7"/><circle cx="7" cy="2" r="1.7"/><circle cx="12" cy="2" r="1.7"/></svg></div>
</body></html>
